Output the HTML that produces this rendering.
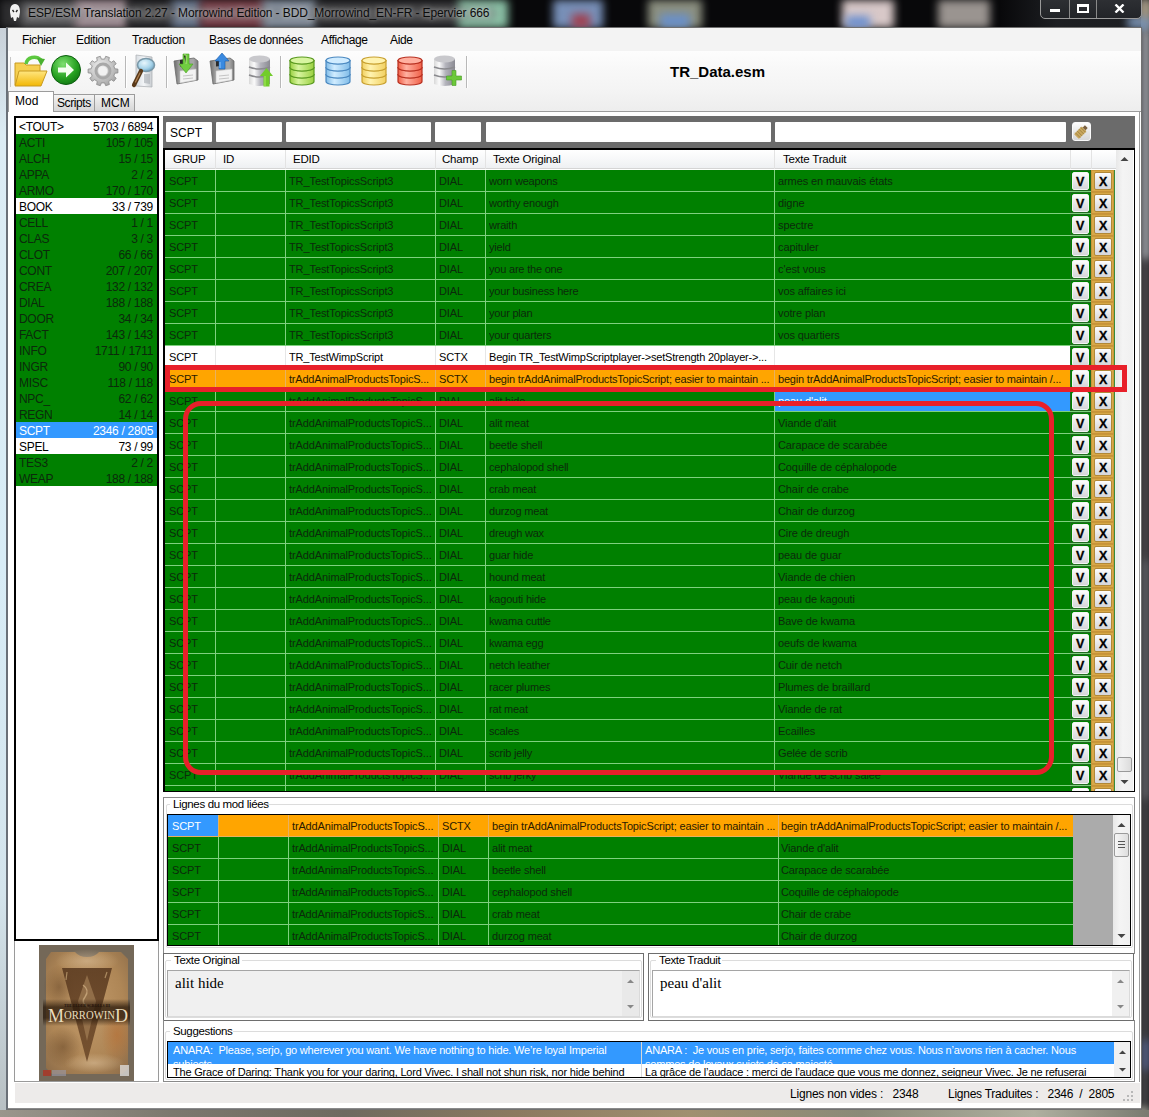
<!DOCTYPE html><html><head><meta charset='utf-8'><style>
*{margin:0;padding:0;box-sizing:border-box}
html,body{width:1149px;height:1117px;overflow:hidden}
body{position:relative;background:#0a0a0c;font-family:"Liberation Sans",sans-serif;font-size:12px;color:#000}
.abs{position:absolute}
.t{position:absolute;white-space:pre;line-height:1}
.bl{position:absolute;filter:blur(4px)}
</style></head><body><div class="abs" style="left:0;top:0;width:1149px;height:1117px;background:#08080a;overflow:hidden"><div class="bl" style="left:0px;top:0px;width:22px;height:28px;background:#2e2e30"></div><div class="bl" style="left:20px;top:0px;width:58px;height:28px;background:#58585a"></div><div class="bl" style="left:75px;top:0px;width:53px;height:28px;background:#b09aa2"></div><div class="bl" style="left:128px;top:0px;width:48px;height:28px;background:#2a2a2c"></div><div class="bl" style="left:172px;top:0px;width:30px;height:28px;background:#6e7e98"></div><div class="bl" style="left:200px;top:0px;width:66px;height:28px;background:#7e3c46"></div><div class="bl" style="left:262px;top:0px;width:56px;height:28px;background:#8a98a8"></div><div class="bl" style="left:316px;top:0px;width:146px;height:28px;background:#2a2a2c"></div><div class="bl" style="left:458px;top:0px;width:50px;height:28px;background:#8cc4a8"></div><div class="bl" style="left:553px;top:0px;width:50px;height:28px;background:#7890b8"></div><div class="bl" style="left:572px;top:14px;width:18px;height:14px;background:#a04050"></div><div class="bl" style="left:648px;top:0px;width:54px;height:28px;background:#8c9080"></div><div class="bl" style="left:660px;top:14px;width:30px;height:14px;background:#6a90c8"></div><div class="bl" style="left:842px;top:0px;width:52px;height:28px;background:#d8c8c8"></div><div class="bl" style="left:846px;top:16px;width:24px;height:12px;background:#6c90d0"></div><div class="bl" style="left:938px;top:0px;width:52px;height:28px;background:#9a9490"></div><div class="bl" style="left:1141px;top:0px;width:8px;height:1117px;background:#5a5a5e"></div><div class="bl" style="left:1143px;top:0px;width:6px;height:30px;background:#c8c0b0"></div><div class="bl" style="left:1143px;top:30px;width:6px;height:230px;background:#c8ccd4"></div><div class="bl" style="left:1143px;top:260px;width:6px;height:300px;background:#4a4448"></div><div class="bl" style="left:1143px;top:560px;width:6px;height:240px;background:#6a6a70"></div><div class="bl" style="left:1143px;top:800px;width:6px;height:240px;background:#3a3a3e"></div><div class="bl" style="left:1143px;top:1040px;width:6px;height:30px;background:#5a6aa0"></div><div class="bl" style="left:1128px;top:18px;width:21px;height:10px;background:#7890b0"></div><div class="bl" style="left:0px;top:1109px;width:1149px;height:8px;background:#7a766c"></div><div class="bl" style="left:0px;top:1109px;width:180px;height:8px;background:#8c8c86"></div><div class="bl" style="left:400px;top:1109px;width:220px;height:8px;background:#6e5a42"></div><div class="bl" style="left:700px;top:1109px;width:200px;height:8px;background:#9a9070"></div><div class="bl" style="left:960px;top:1109px;width:189px;height:8px;background:#a0a498"></div></div><div class="abs" style="left:0;top:28px;width:7px;height:1082px;background:linear-gradient(#c8d0d8,#dcecf4 10%,#d8ecf6 50%,#d4e4ec 80%,#b8c0c4)"></div><div class="abs" style="left:22px;top:6px;width:476px;height:15px;border-radius:8px;background:rgba(120,120,122,0.5);filter:blur(4px)"></div><div class="t" style="left:28px;top:7px;font-size:12px;color:#0c0c0c;letter-spacing:-0.1px;text-shadow:0 0 4px rgba(255,255,255,0.55),0 0 8px rgba(255,255,255,0.35)">ESP/ESM Translation 2.27 - Morrowind Edition - BDD_Morrowind_EN-FR - Epervier 666</div><svg class="abs" style="left:9px;top:4px" width="12" height="18" viewBox="0 0 12 18"><path d="M6 0 C10 0 11 4 11 8 L10 14 L8 13 L7 17 L5 17 L4 13 L2 14 L1 8 C1 4 2 0 6 0Z" fill="#f0f0f0"/><path d="M3.5 6 L5 8 M8.5 6 L7 8" stroke="#222" stroke-width="1.3"/></svg><div class="abs" style="left:1000px;top:0;width:141px;height:27px;background:linear-gradient(90deg,rgba(0,0,0,0),rgba(34,36,40,0.8) 40%)"></div><div class="bl" style="left:1128px;top:16px;width:21px;height:12px;background:#7890b0"></div><div class="bl" style="left:1141px;top:0px;width:8px;height:18px;background:#a89a80"></div><div class="abs" style="left:1040px;top:-2px;width:102px;height:21px;border:1px solid #9a9a9a;border-radius:0 0 5px 5px;background:linear-gradient(#2e3034,#222428)"></div><div class="abs" style="left:1069px;top:0;width:1px;height:18px;background:#8a8a8a"></div><div class="abs" style="left:1096px;top:0;width:1px;height:18px;background:#8a8a8a"></div><div class="abs" style="left:1050px;top:9px;width:10px;height:3px;background:#fff"></div><div class="abs" style="left:1077px;top:4px;width:12px;height:9px;border:2px solid #fff;border-top-width:3px"></div><svg class="abs" style="left:1114px;top:4px" width="11" height="9" viewBox="0 0 11 9"><path d="M1.5 0.5 L9.5 8.5 M9.5 0.5 L1.5 8.5" stroke="#fff" stroke-width="2.4"/></svg><div class="abs" style="left:6px;top:27px;width:1136px;height:1083px;background:#fff;border:1px solid #707070;border-left:2px solid #6a7078"></div><div class="abs" style="left:8px;top:28px;width:1133px;height:23px;background:#f3f3f3"></div><div class="t" style="left:22px;top:34px;font-size:12px;color:#000;letter-spacing:-0.35px">Fichier</div><div class="t" style="left:76px;top:34px;font-size:12px;color:#000;letter-spacing:-0.35px">Edition</div><div class="t" style="left:132px;top:34px;font-size:12px;color:#000;letter-spacing:-0.35px">Traduction</div><div class="t" style="left:209px;top:34px;font-size:12px;color:#000;letter-spacing:-0.35px">Bases de données</div><div class="t" style="left:321px;top:34px;font-size:12px;color:#000;letter-spacing:-0.35px">Affichage</div><div class="t" style="left:390px;top:34px;font-size:12px;color:#000;letter-spacing:-0.35px">Aide</div><div class="abs" style="left:8px;top:51px;width:1133px;height:60px;background:linear-gradient(#fdfdfd,#f8f8f8 30%,#f4f4f4 65%,#ededed)"></div><div class="t" style="left:670px;top:64px;font-size:15px;font-weight:bold;color:#000">TR_Data.esm</div><div class="abs" style="left:53px;top:94px;width:42px;height:17px;border:1px solid #9c9c9c;border-bottom:none;background:linear-gradient(#f4f4f4,#e4e4e4 50%,#d6d6d6)"></div><div class="abs" style="left:95px;top:94px;width:40px;height:17px;border:1px solid #9c9c9c;border-bottom:none;border-left:none;background:linear-gradient(#f4f4f4,#e4e4e4 50%,#d6d6d6)"></div><div class="abs" style="left:8px;top:111px;width:1133px;height:1px;background:#9c9c9c"></div><div class="abs" style="left:8px;top:91px;width:46px;height:21px;border:1px solid #9c9c9c;border-bottom:none;background:#fff"></div><div class="t" style="left:15px;top:95px;font-size:12px">Mod</div><div class="t" style="left:57px;top:97px;font-size:12px;letter-spacing:-0.4px">Scripts</div><div class="t" style="left:101px;top:97px;font-size:12px">MCM</div><div class="abs" style="left:1139px;top:111px;width:1px;height:971px;background:#9c9c9c"></div><div class="abs" style="left:14px;top:116px;width:145px;height:825px;border:2px solid #000;background:#fff"></div><div class="abs" style="left:16px;top:118px;width:141px;height:16px;background:#fff"></div><div class="t" style="left:19px;top:121px;font-size:12px;letter-spacing:-0.3px;color:#000">&lt;TOUT&gt;</div><div class="t" style="right:996px;top:121px;font-size:12px;letter-spacing:-0.3px;color:#000">5703 / 6894</div><div class="abs" style="left:16px;top:134px;width:141px;height:16px;background:#008000"></div><div class="t" style="left:19px;top:137px;font-size:12px;letter-spacing:-0.3px;color:#0b2a0b">ACTI</div><div class="t" style="right:996px;top:137px;font-size:12px;letter-spacing:-0.3px;color:#0b2a0b">105 / 105</div><div class="abs" style="left:16px;top:150px;width:141px;height:16px;background:#008000"></div><div class="t" style="left:19px;top:153px;font-size:12px;letter-spacing:-0.3px;color:#0b2a0b">ALCH</div><div class="t" style="right:996px;top:153px;font-size:12px;letter-spacing:-0.3px;color:#0b2a0b">15 / 15</div><div class="abs" style="left:16px;top:166px;width:141px;height:16px;background:#008000"></div><div class="t" style="left:19px;top:169px;font-size:12px;letter-spacing:-0.3px;color:#0b2a0b">APPA</div><div class="t" style="right:996px;top:169px;font-size:12px;letter-spacing:-0.3px;color:#0b2a0b">2 / 2</div><div class="abs" style="left:16px;top:182px;width:141px;height:16px;background:#008000"></div><div class="t" style="left:19px;top:185px;font-size:12px;letter-spacing:-0.3px;color:#0b2a0b">ARMO</div><div class="t" style="right:996px;top:185px;font-size:12px;letter-spacing:-0.3px;color:#0b2a0b">170 / 170</div><div class="abs" style="left:16px;top:198px;width:141px;height:16px;background:#fff"></div><div class="t" style="left:19px;top:201px;font-size:12px;letter-spacing:-0.3px;color:#000">BOOK</div><div class="t" style="right:996px;top:201px;font-size:12px;letter-spacing:-0.3px;color:#000">33 / 739</div><div class="abs" style="left:16px;top:214px;width:141px;height:16px;background:#008000"></div><div class="t" style="left:19px;top:217px;font-size:12px;letter-spacing:-0.3px;color:#0b2a0b">CELL</div><div class="t" style="right:996px;top:217px;font-size:12px;letter-spacing:-0.3px;color:#0b2a0b">1 / 1</div><div class="abs" style="left:16px;top:230px;width:141px;height:16px;background:#008000"></div><div class="t" style="left:19px;top:233px;font-size:12px;letter-spacing:-0.3px;color:#0b2a0b">CLAS</div><div class="t" style="right:996px;top:233px;font-size:12px;letter-spacing:-0.3px;color:#0b2a0b">3 / 3</div><div class="abs" style="left:16px;top:246px;width:141px;height:16px;background:#008000"></div><div class="t" style="left:19px;top:249px;font-size:12px;letter-spacing:-0.3px;color:#0b2a0b">CLOT</div><div class="t" style="right:996px;top:249px;font-size:12px;letter-spacing:-0.3px;color:#0b2a0b">66 / 66</div><div class="abs" style="left:16px;top:262px;width:141px;height:16px;background:#008000"></div><div class="t" style="left:19px;top:265px;font-size:12px;letter-spacing:-0.3px;color:#0b2a0b">CONT</div><div class="t" style="right:996px;top:265px;font-size:12px;letter-spacing:-0.3px;color:#0b2a0b">207 / 207</div><div class="abs" style="left:16px;top:278px;width:141px;height:16px;background:#008000"></div><div class="t" style="left:19px;top:281px;font-size:12px;letter-spacing:-0.3px;color:#0b2a0b">CREA</div><div class="t" style="right:996px;top:281px;font-size:12px;letter-spacing:-0.3px;color:#0b2a0b">132 / 132</div><div class="abs" style="left:16px;top:294px;width:141px;height:16px;background:#008000"></div><div class="t" style="left:19px;top:297px;font-size:12px;letter-spacing:-0.3px;color:#0b2a0b">DIAL</div><div class="t" style="right:996px;top:297px;font-size:12px;letter-spacing:-0.3px;color:#0b2a0b">188 / 188</div><div class="abs" style="left:16px;top:310px;width:141px;height:16px;background:#008000"></div><div class="t" style="left:19px;top:313px;font-size:12px;letter-spacing:-0.3px;color:#0b2a0b">DOOR</div><div class="t" style="right:996px;top:313px;font-size:12px;letter-spacing:-0.3px;color:#0b2a0b">34 / 34</div><div class="abs" style="left:16px;top:326px;width:141px;height:16px;background:#008000"></div><div class="t" style="left:19px;top:329px;font-size:12px;letter-spacing:-0.3px;color:#0b2a0b">FACT</div><div class="t" style="right:996px;top:329px;font-size:12px;letter-spacing:-0.3px;color:#0b2a0b">143 / 143</div><div class="abs" style="left:16px;top:342px;width:141px;height:16px;background:#008000"></div><div class="t" style="left:19px;top:345px;font-size:12px;letter-spacing:-0.3px;color:#0b2a0b">INFO</div><div class="t" style="right:996px;top:345px;font-size:12px;letter-spacing:-0.3px;color:#0b2a0b">1711 / 1711</div><div class="abs" style="left:16px;top:358px;width:141px;height:16px;background:#008000"></div><div class="t" style="left:19px;top:361px;font-size:12px;letter-spacing:-0.3px;color:#0b2a0b">INGR</div><div class="t" style="right:996px;top:361px;font-size:12px;letter-spacing:-0.3px;color:#0b2a0b">90 / 90</div><div class="abs" style="left:16px;top:374px;width:141px;height:16px;background:#008000"></div><div class="t" style="left:19px;top:377px;font-size:12px;letter-spacing:-0.3px;color:#0b2a0b">MISC</div><div class="t" style="right:996px;top:377px;font-size:12px;letter-spacing:-0.3px;color:#0b2a0b">118 / 118</div><div class="abs" style="left:16px;top:390px;width:141px;height:16px;background:#008000"></div><div class="t" style="left:19px;top:393px;font-size:12px;letter-spacing:-0.3px;color:#0b2a0b">NPC_</div><div class="t" style="right:996px;top:393px;font-size:12px;letter-spacing:-0.3px;color:#0b2a0b">62 / 62</div><div class="abs" style="left:16px;top:406px;width:141px;height:16px;background:#008000"></div><div class="t" style="left:19px;top:409px;font-size:12px;letter-spacing:-0.3px;color:#0b2a0b">REGN</div><div class="t" style="right:996px;top:409px;font-size:12px;letter-spacing:-0.3px;color:#0b2a0b">14 / 14</div><div class="abs" style="left:16px;top:422px;width:141px;height:16px;background:#3399ff"></div><div class="t" style="left:19px;top:425px;font-size:12px;letter-spacing:-0.3px;color:#fff">SCPT</div><div class="t" style="right:996px;top:425px;font-size:12px;letter-spacing:-0.3px;color:#fff">2346 / 2805</div><div class="abs" style="left:16px;top:438px;width:141px;height:16px;background:#fff"></div><div class="t" style="left:19px;top:441px;font-size:12px;letter-spacing:-0.3px;color:#000">SPEL</div><div class="t" style="right:996px;top:441px;font-size:12px;letter-spacing:-0.3px;color:#000">73 / 99</div><div class="abs" style="left:16px;top:454px;width:141px;height:16px;background:#008000"></div><div class="t" style="left:19px;top:457px;font-size:12px;letter-spacing:-0.3px;color:#0b2a0b">TES3</div><div class="t" style="right:996px;top:457px;font-size:12px;letter-spacing:-0.3px;color:#0b2a0b">2 / 2</div><div class="abs" style="left:16px;top:470px;width:141px;height:16px;background:#008000"></div><div class="t" style="left:19px;top:473px;font-size:12px;letter-spacing:-0.3px;color:#0b2a0b">WEAP</div><div class="t" style="right:996px;top:473px;font-size:12px;letter-spacing:-0.3px;color:#0b2a0b">188 / 188</div><div class="abs" style="left:14px;top:941px;width:145px;height:141px;border:1px solid #9a9a9a;border-top:none;background:#fff"></div><div class="abs" style="left:163px;top:116px;width:972px;height:33px;background:#6b6b6b"></div><div class="abs" style="left:166px;top:122px;width:46px;height:20px;background:#fff;border-radius:1px"></div><div class="abs" style="left:216px;top:122px;width:66px;height:20px;background:#fff;border-radius:1px"></div><div class="abs" style="left:286px;top:122px;width:145px;height:20px;background:#fff;border-radius:1px"></div><div class="abs" style="left:435px;top:122px;width:46px;height:20px;background:#fff;border-radius:1px"></div><div class="abs" style="left:486px;top:122px;width:285px;height:20px;background:#fff;border-radius:1px"></div><div class="abs" style="left:775px;top:122px;width:291px;height:20px;background:#fff;border-radius:1px"></div><div class="t" style="left:170px;top:127px;font-size:12px">SCPT</div><div class="abs" style="left:1072px;top:122px;width:19px;height:19px;border-radius:3px;border:1px solid #fafafa;background:linear-gradient(#fdfdfd,#e4e4e4 60%,#d8d8d8)"></div><svg class="abs" style="left:1072px;top:122px" width="19" height="19" viewBox="0 0 19 19"><g transform="rotate(-45 9 10)"><rect x="2.5" y="6.5" width="11" height="7" rx="1" fill="#c9a85e"/><path d="M4.5 6.5 L4.5 13.5 M7 6.5 L7 13.5 M9.5 6.5 L9.5 13.5 M12 6.5 L12 13.5" stroke="#8a6a30" stroke-width="0.7" opacity="0.8"/><rect x="13.5" y="8" width="3" height="4" fill="#7a6040"/></g></svg><div class="abs" style="left:163px;top:148px;width:972px;height:644px;border:1px solid #000;border-top-width:2px;border-left-width:2px;background:#fff;overflow:hidden"><div class="abs" style="left:0;top:0;width:951px;height:19px;background:linear-gradient(#ffffff,#f7f8f9 50%,#eef0f2);border-bottom:1px solid #d5d5d5"></div><div class="abs" style="left:50px;top:0;width:1px;height:19px;background:#e3e3e3"></div><div class="abs" style="left:120px;top:0;width:1px;height:19px;background:#e3e3e3"></div><div class="abs" style="left:270px;top:0;width:1px;height:19px;background:#e3e3e3"></div><div class="abs" style="left:320px;top:0;width:1px;height:19px;background:#e3e3e3"></div><div class="abs" style="left:609px;top:0;width:1px;height:19px;background:#e3e3e3"></div><div class="abs" style="left:905px;top:0;width:1px;height:19px;background:#e3e3e3"></div><div class="abs" style="left:926px;top:0;width:1px;height:19px;background:#e3e3e3"></div><div class="t" style="left:8px;top:4px;font-size:11.5px;letter-spacing:-0.2px;color:#000">GRUP</div><div class="t" style="left:58px;top:4px;font-size:11.5px;letter-spacing:-0.2px;color:#000">ID</div><div class="t" style="left:128px;top:4px;font-size:11.5px;letter-spacing:-0.2px;color:#000">EDID</div><div class="t" style="left:277px;top:4px;font-size:11.5px;letter-spacing:-0.2px;color:#000">Champ</div><div class="t" style="left:328px;top:4px;font-size:11.5px;letter-spacing:-0.2px;color:#000">Texte Original</div><div class="t" style="left:618px;top:4px;font-size:11.5px;letter-spacing:-0.2px;color:#000">Texte Traduit</div><div class="abs" style="left:0;top:20px;width:951px;height:22px;background:#008000"></div><div class="abs" style="left:0;top:41px;width:951px;height:1px;background:#7fd07f"></div><div class="abs" style="left:50px;top:20px;width:1px;height:22px;background:#7fd07f"></div><div class="abs" style="left:120px;top:20px;width:1px;height:22px;background:#7fd07f"></div><div class="abs" style="left:270px;top:20px;width:1px;height:22px;background:#7fd07f"></div><div class="abs" style="left:320px;top:20px;width:1px;height:22px;background:#7fd07f"></div><div class="abs" style="left:609px;top:20px;width:1px;height:22px;background:#7fd07f"></div><div class="abs" style="left:905px;top:20px;width:1px;height:22px;background:#7fd07f"></div><div class="t" style="left:4px;top:26px;font-size:11px;letter-spacing:-0.1px;color:#0b2a0b;width:45px;overflow:hidden">SCPT</div><div class="t" style="left:124px;top:26px;font-size:11px;letter-spacing:-0.1px;color:#0b2a0b;width:145px;overflow:hidden">TR_TestTopicsScript3</div><div class="t" style="left:274px;top:26px;font-size:11px;letter-spacing:-0.1px;color:#0b2a0b;width:45px;overflow:hidden">DIAL</div><div class="t" style="left:324px;top:26px;font-size:11px;letter-spacing:-0.2px;color:#0b2a0b;width:284px;overflow:hidden">worn weapons</div><div class="t" style="left:613px;top:26px;font-size:11px;letter-spacing:-0.1px;color:#0b2a0b;width:291px;overflow:hidden">armes en mauvais états</div><div class="abs" style="left:905px;top:20px;width:21px;height:21px;background:#008000;border:1px solid #226a22"></div><div class="abs" style="left:905px;top:41px;width:21px;height:1px;background:#7fd07f"></div><div class="abs" style="left:926px;top:20px;width:23px;height:22px;background:#d9a848;border:1px solid #c89838;border-bottom-color:#c8923a"></div><div class="abs" style="left:907px;top:22px;width:17px;height:18px;border-radius:2px;border:1px solid #f4f4f4;background:linear-gradient(#fdfdfd,#e8e8ea 50%,#d6d6da)"></div><div class="abs" style="left:929px;top:22px;width:18px;height:18px;border-radius:2px;border:1px solid #b08838;background:linear-gradient(#fdfdfd,#e8e8ea 50%,#d6d6da)"></div><div class="t" style="left:911px;top:26px;font-size:12.5px;font-weight:bold;color:#000;-webkit-text-stroke:0.3px #000">V</div><div class="t" style="left:934px;top:26px;font-size:12.5px;font-weight:bold;color:#000;-webkit-text-stroke:0.3px #000">X</div><div class="abs" style="left:0;top:42px;width:951px;height:22px;background:#008000"></div><div class="abs" style="left:0;top:63px;width:951px;height:1px;background:#7fd07f"></div><div class="abs" style="left:50px;top:42px;width:1px;height:22px;background:#7fd07f"></div><div class="abs" style="left:120px;top:42px;width:1px;height:22px;background:#7fd07f"></div><div class="abs" style="left:270px;top:42px;width:1px;height:22px;background:#7fd07f"></div><div class="abs" style="left:320px;top:42px;width:1px;height:22px;background:#7fd07f"></div><div class="abs" style="left:609px;top:42px;width:1px;height:22px;background:#7fd07f"></div><div class="abs" style="left:905px;top:42px;width:1px;height:22px;background:#7fd07f"></div><div class="t" style="left:4px;top:48px;font-size:11px;letter-spacing:-0.1px;color:#0b2a0b;width:45px;overflow:hidden">SCPT</div><div class="t" style="left:124px;top:48px;font-size:11px;letter-spacing:-0.1px;color:#0b2a0b;width:145px;overflow:hidden">TR_TestTopicsScript3</div><div class="t" style="left:274px;top:48px;font-size:11px;letter-spacing:-0.1px;color:#0b2a0b;width:45px;overflow:hidden">DIAL</div><div class="t" style="left:324px;top:48px;font-size:11px;letter-spacing:-0.2px;color:#0b2a0b;width:284px;overflow:hidden">worthy enough</div><div class="t" style="left:613px;top:48px;font-size:11px;letter-spacing:-0.1px;color:#0b2a0b;width:291px;overflow:hidden">digne</div><div class="abs" style="left:905px;top:42px;width:21px;height:21px;background:#008000;border:1px solid #226a22"></div><div class="abs" style="left:905px;top:63px;width:21px;height:1px;background:#7fd07f"></div><div class="abs" style="left:926px;top:42px;width:23px;height:22px;background:#d9a848;border:1px solid #c89838;border-bottom-color:#c8923a"></div><div class="abs" style="left:907px;top:44px;width:17px;height:18px;border-radius:2px;border:1px solid #f4f4f4;background:linear-gradient(#fdfdfd,#e8e8ea 50%,#d6d6da)"></div><div class="abs" style="left:929px;top:44px;width:18px;height:18px;border-radius:2px;border:1px solid #b08838;background:linear-gradient(#fdfdfd,#e8e8ea 50%,#d6d6da)"></div><div class="t" style="left:911px;top:48px;font-size:12.5px;font-weight:bold;color:#000;-webkit-text-stroke:0.3px #000">V</div><div class="t" style="left:934px;top:48px;font-size:12.5px;font-weight:bold;color:#000;-webkit-text-stroke:0.3px #000">X</div><div class="abs" style="left:0;top:64px;width:951px;height:22px;background:#008000"></div><div class="abs" style="left:0;top:85px;width:951px;height:1px;background:#7fd07f"></div><div class="abs" style="left:50px;top:64px;width:1px;height:22px;background:#7fd07f"></div><div class="abs" style="left:120px;top:64px;width:1px;height:22px;background:#7fd07f"></div><div class="abs" style="left:270px;top:64px;width:1px;height:22px;background:#7fd07f"></div><div class="abs" style="left:320px;top:64px;width:1px;height:22px;background:#7fd07f"></div><div class="abs" style="left:609px;top:64px;width:1px;height:22px;background:#7fd07f"></div><div class="abs" style="left:905px;top:64px;width:1px;height:22px;background:#7fd07f"></div><div class="t" style="left:4px;top:70px;font-size:11px;letter-spacing:-0.1px;color:#0b2a0b;width:45px;overflow:hidden">SCPT</div><div class="t" style="left:124px;top:70px;font-size:11px;letter-spacing:-0.1px;color:#0b2a0b;width:145px;overflow:hidden">TR_TestTopicsScript3</div><div class="t" style="left:274px;top:70px;font-size:11px;letter-spacing:-0.1px;color:#0b2a0b;width:45px;overflow:hidden">DIAL</div><div class="t" style="left:324px;top:70px;font-size:11px;letter-spacing:-0.2px;color:#0b2a0b;width:284px;overflow:hidden">wraith</div><div class="t" style="left:613px;top:70px;font-size:11px;letter-spacing:-0.1px;color:#0b2a0b;width:291px;overflow:hidden">spectre</div><div class="abs" style="left:905px;top:64px;width:21px;height:21px;background:#008000;border:1px solid #226a22"></div><div class="abs" style="left:905px;top:85px;width:21px;height:1px;background:#7fd07f"></div><div class="abs" style="left:926px;top:64px;width:23px;height:22px;background:#d9a848;border:1px solid #c89838;border-bottom-color:#c8923a"></div><div class="abs" style="left:907px;top:66px;width:17px;height:18px;border-radius:2px;border:1px solid #f4f4f4;background:linear-gradient(#fdfdfd,#e8e8ea 50%,#d6d6da)"></div><div class="abs" style="left:929px;top:66px;width:18px;height:18px;border-radius:2px;border:1px solid #b08838;background:linear-gradient(#fdfdfd,#e8e8ea 50%,#d6d6da)"></div><div class="t" style="left:911px;top:70px;font-size:12.5px;font-weight:bold;color:#000;-webkit-text-stroke:0.3px #000">V</div><div class="t" style="left:934px;top:70px;font-size:12.5px;font-weight:bold;color:#000;-webkit-text-stroke:0.3px #000">X</div><div class="abs" style="left:0;top:86px;width:951px;height:22px;background:#008000"></div><div class="abs" style="left:0;top:107px;width:951px;height:1px;background:#7fd07f"></div><div class="abs" style="left:50px;top:86px;width:1px;height:22px;background:#7fd07f"></div><div class="abs" style="left:120px;top:86px;width:1px;height:22px;background:#7fd07f"></div><div class="abs" style="left:270px;top:86px;width:1px;height:22px;background:#7fd07f"></div><div class="abs" style="left:320px;top:86px;width:1px;height:22px;background:#7fd07f"></div><div class="abs" style="left:609px;top:86px;width:1px;height:22px;background:#7fd07f"></div><div class="abs" style="left:905px;top:86px;width:1px;height:22px;background:#7fd07f"></div><div class="t" style="left:4px;top:92px;font-size:11px;letter-spacing:-0.1px;color:#0b2a0b;width:45px;overflow:hidden">SCPT</div><div class="t" style="left:124px;top:92px;font-size:11px;letter-spacing:-0.1px;color:#0b2a0b;width:145px;overflow:hidden">TR_TestTopicsScript3</div><div class="t" style="left:274px;top:92px;font-size:11px;letter-spacing:-0.1px;color:#0b2a0b;width:45px;overflow:hidden">DIAL</div><div class="t" style="left:324px;top:92px;font-size:11px;letter-spacing:-0.2px;color:#0b2a0b;width:284px;overflow:hidden">yield</div><div class="t" style="left:613px;top:92px;font-size:11px;letter-spacing:-0.1px;color:#0b2a0b;width:291px;overflow:hidden">capituler</div><div class="abs" style="left:905px;top:86px;width:21px;height:21px;background:#008000;border:1px solid #226a22"></div><div class="abs" style="left:905px;top:107px;width:21px;height:1px;background:#7fd07f"></div><div class="abs" style="left:926px;top:86px;width:23px;height:22px;background:#d9a848;border:1px solid #c89838;border-bottom-color:#c8923a"></div><div class="abs" style="left:907px;top:88px;width:17px;height:18px;border-radius:2px;border:1px solid #f4f4f4;background:linear-gradient(#fdfdfd,#e8e8ea 50%,#d6d6da)"></div><div class="abs" style="left:929px;top:88px;width:18px;height:18px;border-radius:2px;border:1px solid #b08838;background:linear-gradient(#fdfdfd,#e8e8ea 50%,#d6d6da)"></div><div class="t" style="left:911px;top:92px;font-size:12.5px;font-weight:bold;color:#000;-webkit-text-stroke:0.3px #000">V</div><div class="t" style="left:934px;top:92px;font-size:12.5px;font-weight:bold;color:#000;-webkit-text-stroke:0.3px #000">X</div><div class="abs" style="left:0;top:108px;width:951px;height:22px;background:#008000"></div><div class="abs" style="left:0;top:129px;width:951px;height:1px;background:#7fd07f"></div><div class="abs" style="left:50px;top:108px;width:1px;height:22px;background:#7fd07f"></div><div class="abs" style="left:120px;top:108px;width:1px;height:22px;background:#7fd07f"></div><div class="abs" style="left:270px;top:108px;width:1px;height:22px;background:#7fd07f"></div><div class="abs" style="left:320px;top:108px;width:1px;height:22px;background:#7fd07f"></div><div class="abs" style="left:609px;top:108px;width:1px;height:22px;background:#7fd07f"></div><div class="abs" style="left:905px;top:108px;width:1px;height:22px;background:#7fd07f"></div><div class="t" style="left:4px;top:114px;font-size:11px;letter-spacing:-0.1px;color:#0b2a0b;width:45px;overflow:hidden">SCPT</div><div class="t" style="left:124px;top:114px;font-size:11px;letter-spacing:-0.1px;color:#0b2a0b;width:145px;overflow:hidden">TR_TestTopicsScript3</div><div class="t" style="left:274px;top:114px;font-size:11px;letter-spacing:-0.1px;color:#0b2a0b;width:45px;overflow:hidden">DIAL</div><div class="t" style="left:324px;top:114px;font-size:11px;letter-spacing:-0.2px;color:#0b2a0b;width:284px;overflow:hidden">you are the one</div><div class="t" style="left:613px;top:114px;font-size:11px;letter-spacing:-0.1px;color:#0b2a0b;width:291px;overflow:hidden">c&#x27;est vous</div><div class="abs" style="left:905px;top:108px;width:21px;height:21px;background:#008000;border:1px solid #226a22"></div><div class="abs" style="left:905px;top:129px;width:21px;height:1px;background:#7fd07f"></div><div class="abs" style="left:926px;top:108px;width:23px;height:22px;background:#d9a848;border:1px solid #c89838;border-bottom-color:#c8923a"></div><div class="abs" style="left:907px;top:110px;width:17px;height:18px;border-radius:2px;border:1px solid #f4f4f4;background:linear-gradient(#fdfdfd,#e8e8ea 50%,#d6d6da)"></div><div class="abs" style="left:929px;top:110px;width:18px;height:18px;border-radius:2px;border:1px solid #b08838;background:linear-gradient(#fdfdfd,#e8e8ea 50%,#d6d6da)"></div><div class="t" style="left:911px;top:114px;font-size:12.5px;font-weight:bold;color:#000;-webkit-text-stroke:0.3px #000">V</div><div class="t" style="left:934px;top:114px;font-size:12.5px;font-weight:bold;color:#000;-webkit-text-stroke:0.3px #000">X</div><div class="abs" style="left:0;top:130px;width:951px;height:22px;background:#008000"></div><div class="abs" style="left:0;top:151px;width:951px;height:1px;background:#7fd07f"></div><div class="abs" style="left:50px;top:130px;width:1px;height:22px;background:#7fd07f"></div><div class="abs" style="left:120px;top:130px;width:1px;height:22px;background:#7fd07f"></div><div class="abs" style="left:270px;top:130px;width:1px;height:22px;background:#7fd07f"></div><div class="abs" style="left:320px;top:130px;width:1px;height:22px;background:#7fd07f"></div><div class="abs" style="left:609px;top:130px;width:1px;height:22px;background:#7fd07f"></div><div class="abs" style="left:905px;top:130px;width:1px;height:22px;background:#7fd07f"></div><div class="t" style="left:4px;top:136px;font-size:11px;letter-spacing:-0.1px;color:#0b2a0b;width:45px;overflow:hidden">SCPT</div><div class="t" style="left:124px;top:136px;font-size:11px;letter-spacing:-0.1px;color:#0b2a0b;width:145px;overflow:hidden">TR_TestTopicsScript3</div><div class="t" style="left:274px;top:136px;font-size:11px;letter-spacing:-0.1px;color:#0b2a0b;width:45px;overflow:hidden">DIAL</div><div class="t" style="left:324px;top:136px;font-size:11px;letter-spacing:-0.2px;color:#0b2a0b;width:284px;overflow:hidden">your business here</div><div class="t" style="left:613px;top:136px;font-size:11px;letter-spacing:-0.1px;color:#0b2a0b;width:291px;overflow:hidden">vos affaires ici</div><div class="abs" style="left:905px;top:130px;width:21px;height:21px;background:#008000;border:1px solid #226a22"></div><div class="abs" style="left:905px;top:151px;width:21px;height:1px;background:#7fd07f"></div><div class="abs" style="left:926px;top:130px;width:23px;height:22px;background:#d9a848;border:1px solid #c89838;border-bottom-color:#c8923a"></div><div class="abs" style="left:907px;top:132px;width:17px;height:18px;border-radius:2px;border:1px solid #f4f4f4;background:linear-gradient(#fdfdfd,#e8e8ea 50%,#d6d6da)"></div><div class="abs" style="left:929px;top:132px;width:18px;height:18px;border-radius:2px;border:1px solid #b08838;background:linear-gradient(#fdfdfd,#e8e8ea 50%,#d6d6da)"></div><div class="t" style="left:911px;top:136px;font-size:12.5px;font-weight:bold;color:#000;-webkit-text-stroke:0.3px #000">V</div><div class="t" style="left:934px;top:136px;font-size:12.5px;font-weight:bold;color:#000;-webkit-text-stroke:0.3px #000">X</div><div class="abs" style="left:0;top:152px;width:951px;height:22px;background:#008000"></div><div class="abs" style="left:0;top:173px;width:951px;height:1px;background:#7fd07f"></div><div class="abs" style="left:50px;top:152px;width:1px;height:22px;background:#7fd07f"></div><div class="abs" style="left:120px;top:152px;width:1px;height:22px;background:#7fd07f"></div><div class="abs" style="left:270px;top:152px;width:1px;height:22px;background:#7fd07f"></div><div class="abs" style="left:320px;top:152px;width:1px;height:22px;background:#7fd07f"></div><div class="abs" style="left:609px;top:152px;width:1px;height:22px;background:#7fd07f"></div><div class="abs" style="left:905px;top:152px;width:1px;height:22px;background:#7fd07f"></div><div class="t" style="left:4px;top:158px;font-size:11px;letter-spacing:-0.1px;color:#0b2a0b;width:45px;overflow:hidden">SCPT</div><div class="t" style="left:124px;top:158px;font-size:11px;letter-spacing:-0.1px;color:#0b2a0b;width:145px;overflow:hidden">TR_TestTopicsScript3</div><div class="t" style="left:274px;top:158px;font-size:11px;letter-spacing:-0.1px;color:#0b2a0b;width:45px;overflow:hidden">DIAL</div><div class="t" style="left:324px;top:158px;font-size:11px;letter-spacing:-0.2px;color:#0b2a0b;width:284px;overflow:hidden">your plan</div><div class="t" style="left:613px;top:158px;font-size:11px;letter-spacing:-0.1px;color:#0b2a0b;width:291px;overflow:hidden">votre plan</div><div class="abs" style="left:905px;top:152px;width:21px;height:21px;background:#008000;border:1px solid #226a22"></div><div class="abs" style="left:905px;top:173px;width:21px;height:1px;background:#7fd07f"></div><div class="abs" style="left:926px;top:152px;width:23px;height:22px;background:#d9a848;border:1px solid #c89838;border-bottom-color:#c8923a"></div><div class="abs" style="left:907px;top:154px;width:17px;height:18px;border-radius:2px;border:1px solid #f4f4f4;background:linear-gradient(#fdfdfd,#e8e8ea 50%,#d6d6da)"></div><div class="abs" style="left:929px;top:154px;width:18px;height:18px;border-radius:2px;border:1px solid #b08838;background:linear-gradient(#fdfdfd,#e8e8ea 50%,#d6d6da)"></div><div class="t" style="left:911px;top:158px;font-size:12.5px;font-weight:bold;color:#000;-webkit-text-stroke:0.3px #000">V</div><div class="t" style="left:934px;top:158px;font-size:12.5px;font-weight:bold;color:#000;-webkit-text-stroke:0.3px #000">X</div><div class="abs" style="left:0;top:174px;width:951px;height:22px;background:#008000"></div><div class="abs" style="left:0;top:195px;width:951px;height:1px;background:#7fd07f"></div><div class="abs" style="left:50px;top:174px;width:1px;height:22px;background:#7fd07f"></div><div class="abs" style="left:120px;top:174px;width:1px;height:22px;background:#7fd07f"></div><div class="abs" style="left:270px;top:174px;width:1px;height:22px;background:#7fd07f"></div><div class="abs" style="left:320px;top:174px;width:1px;height:22px;background:#7fd07f"></div><div class="abs" style="left:609px;top:174px;width:1px;height:22px;background:#7fd07f"></div><div class="abs" style="left:905px;top:174px;width:1px;height:22px;background:#7fd07f"></div><div class="t" style="left:4px;top:180px;font-size:11px;letter-spacing:-0.1px;color:#0b2a0b;width:45px;overflow:hidden">SCPT</div><div class="t" style="left:124px;top:180px;font-size:11px;letter-spacing:-0.1px;color:#0b2a0b;width:145px;overflow:hidden">TR_TestTopicsScript3</div><div class="t" style="left:274px;top:180px;font-size:11px;letter-spacing:-0.1px;color:#0b2a0b;width:45px;overflow:hidden">DIAL</div><div class="t" style="left:324px;top:180px;font-size:11px;letter-spacing:-0.2px;color:#0b2a0b;width:284px;overflow:hidden">your quarters</div><div class="t" style="left:613px;top:180px;font-size:11px;letter-spacing:-0.1px;color:#0b2a0b;width:291px;overflow:hidden">vos quartiers</div><div class="abs" style="left:905px;top:174px;width:21px;height:21px;background:#008000;border:1px solid #226a22"></div><div class="abs" style="left:905px;top:195px;width:21px;height:1px;background:#7fd07f"></div><div class="abs" style="left:926px;top:174px;width:23px;height:22px;background:#d9a848;border:1px solid #c89838;border-bottom-color:#c8923a"></div><div class="abs" style="left:907px;top:176px;width:17px;height:18px;border-radius:2px;border:1px solid #f4f4f4;background:linear-gradient(#fdfdfd,#e8e8ea 50%,#d6d6da)"></div><div class="abs" style="left:929px;top:176px;width:18px;height:18px;border-radius:2px;border:1px solid #b08838;background:linear-gradient(#fdfdfd,#e8e8ea 50%,#d6d6da)"></div><div class="t" style="left:911px;top:180px;font-size:12.5px;font-weight:bold;color:#000;-webkit-text-stroke:0.3px #000">V</div><div class="t" style="left:934px;top:180px;font-size:12.5px;font-weight:bold;color:#000;-webkit-text-stroke:0.3px #000">X</div><div class="abs" style="left:0;top:196px;width:951px;height:22px;background:#fff"></div><div class="abs" style="left:0;top:217px;width:951px;height:1px;background:#e6e6e6"></div><div class="abs" style="left:50px;top:196px;width:1px;height:22px;background:#e6e6e6"></div><div class="abs" style="left:120px;top:196px;width:1px;height:22px;background:#e6e6e6"></div><div class="abs" style="left:270px;top:196px;width:1px;height:22px;background:#e6e6e6"></div><div class="abs" style="left:320px;top:196px;width:1px;height:22px;background:#e6e6e6"></div><div class="abs" style="left:609px;top:196px;width:1px;height:22px;background:#e6e6e6"></div><div class="abs" style="left:905px;top:196px;width:1px;height:22px;background:#e6e6e6"></div><div class="t" style="left:4px;top:202px;font-size:11px;letter-spacing:-0.2px;color:#000;width:45px;overflow:hidden">SCPT</div><div class="t" style="left:124px;top:202px;font-size:11px;letter-spacing:-0.2px;color:#000;width:145px;overflow:hidden">TR_TestWimpScript</div><div class="t" style="left:274px;top:202px;font-size:11px;letter-spacing:-0.2px;color:#000;width:45px;overflow:hidden">SCTX</div><div class="t" style="left:324px;top:202px;font-size:11px;letter-spacing:-0.2px;color:#000;width:284px;overflow:hidden">Begin TR_TestWimpScriptplayer-&gt;setStrength 20player-&gt;...</div><div class="abs" style="left:905px;top:196px;width:21px;height:21px;background:#008000;border:1px solid #226a22"></div><div class="abs" style="left:905px;top:217px;width:21px;height:1px;background:#7fd07f"></div><div class="abs" style="left:926px;top:196px;width:23px;height:22px;background:#d9a848;border:1px solid #c89838;border-bottom-color:#c8923a"></div><div class="abs" style="left:907px;top:198px;width:17px;height:18px;border-radius:2px;border:1px solid #f4f4f4;background:linear-gradient(#fdfdfd,#e8e8ea 50%,#d6d6da)"></div><div class="abs" style="left:929px;top:198px;width:18px;height:18px;border-radius:2px;border:1px solid #b08838;background:linear-gradient(#fdfdfd,#e8e8ea 50%,#d6d6da)"></div><div class="t" style="left:911px;top:202px;font-size:12.5px;font-weight:bold;color:#000;-webkit-text-stroke:0.3px #000">V</div><div class="t" style="left:934px;top:202px;font-size:12.5px;font-weight:bold;color:#000;-webkit-text-stroke:0.3px #000">X</div><div class="abs" style="left:0;top:218px;width:951px;height:22px;background:#ffa500"></div><div class="abs" style="left:0;top:239px;width:951px;height:1px;background:#e8b060"></div><div class="abs" style="left:50px;top:218px;width:1px;height:22px;background:#e8b060"></div><div class="abs" style="left:120px;top:218px;width:1px;height:22px;background:#e8b060"></div><div class="abs" style="left:270px;top:218px;width:1px;height:22px;background:#e8b060"></div><div class="abs" style="left:320px;top:218px;width:1px;height:22px;background:#e8b060"></div><div class="abs" style="left:609px;top:218px;width:1px;height:22px;background:#e8b060"></div><div class="abs" style="left:905px;top:218px;width:1px;height:22px;background:#e8b060"></div><div class="t" style="left:4px;top:224px;font-size:11px;letter-spacing:-0.2px;color:#2a1a00;width:45px;overflow:hidden">SCPT</div><div class="t" style="left:124px;top:224px;font-size:11px;letter-spacing:-0.2px;color:#2a1a00;width:145px;overflow:hidden">trAddAnimalProductsTopicS...</div><div class="t" style="left:274px;top:224px;font-size:11px;letter-spacing:-0.2px;color:#2a1a00;width:45px;overflow:hidden">SCTX</div><div class="t" style="left:324px;top:224px;font-size:11px;letter-spacing:-0.2px;color:#2a1a00;width:284px;overflow:hidden">begin trAddAnimalProductsTopicScript; easier to maintain ...</div><div class="t" style="left:613px;top:224px;font-size:11px;letter-spacing:-0.2px;color:#2a1a00;width:291px;overflow:hidden">begin trAddAnimalProductsTopicScript; easier to maintain /...</div><div class="abs" style="left:905px;top:218px;width:21px;height:21px;background:#008000;border:1px solid #226a22"></div><div class="abs" style="left:905px;top:239px;width:21px;height:1px;background:#7fd07f"></div><div class="abs" style="left:926px;top:218px;width:23px;height:22px;background:#d9a848;border:1px solid #c89838;border-bottom-color:#c8923a"></div><div class="abs" style="left:907px;top:220px;width:17px;height:18px;border-radius:2px;border:1px solid #f4f4f4;background:linear-gradient(#fdfdfd,#e8e8ea 50%,#d6d6da)"></div><div class="abs" style="left:929px;top:220px;width:18px;height:18px;border-radius:2px;border:1px solid #b08838;background:linear-gradient(#fdfdfd,#e8e8ea 50%,#d6d6da)"></div><div class="t" style="left:911px;top:224px;font-size:12.5px;font-weight:bold;color:#000;-webkit-text-stroke:0.3px #000">V</div><div class="t" style="left:934px;top:224px;font-size:12.5px;font-weight:bold;color:#000;-webkit-text-stroke:0.3px #000">X</div><div class="abs" style="left:0;top:240px;width:951px;height:22px;background:#008000"></div><div class="abs" style="left:610px;top:240px;width:295px;height:22px;background:#3399ff"></div><div class="abs" style="left:0;top:261px;width:951px;height:1px;background:#7fd07f"></div><div class="abs" style="left:50px;top:240px;width:1px;height:22px;background:#7fd07f"></div><div class="abs" style="left:120px;top:240px;width:1px;height:22px;background:#7fd07f"></div><div class="abs" style="left:270px;top:240px;width:1px;height:22px;background:#7fd07f"></div><div class="abs" style="left:320px;top:240px;width:1px;height:22px;background:#7fd07f"></div><div class="abs" style="left:609px;top:240px;width:1px;height:22px;background:#7fd07f"></div><div class="abs" style="left:905px;top:240px;width:1px;height:22px;background:#7fd07f"></div><div class="t" style="left:4px;top:246px;font-size:11px;letter-spacing:-0.1px;color:#0b2a0b;width:45px;overflow:hidden">SCPT</div><div class="t" style="left:124px;top:246px;font-size:11px;letter-spacing:-0.1px;color:#0b2a0b;width:145px;overflow:hidden">trAddAnimalProductsTopicS...</div><div class="t" style="left:274px;top:246px;font-size:11px;letter-spacing:-0.1px;color:#0b2a0b;width:45px;overflow:hidden">DIAL</div><div class="t" style="left:324px;top:246px;font-size:11px;letter-spacing:-0.2px;color:#0b2a0b;width:284px;overflow:hidden">alit hide</div><div class="t" style="left:613px;top:246px;font-size:11px;letter-spacing:-0.1px;color:#fff;width:291px;overflow:hidden">peau d&#x27;alit</div><div class="abs" style="left:905px;top:240px;width:21px;height:21px;background:#008000;border:1px solid #226a22"></div><div class="abs" style="left:905px;top:261px;width:21px;height:1px;background:#7fd07f"></div><div class="abs" style="left:926px;top:240px;width:23px;height:22px;background:#d9a848;border:1px solid #c89838;border-bottom-color:#c8923a"></div><div class="abs" style="left:907px;top:242px;width:17px;height:18px;border-radius:2px;border:1px solid #f4f4f4;background:linear-gradient(#fdfdfd,#e8e8ea 50%,#d6d6da)"></div><div class="abs" style="left:929px;top:242px;width:18px;height:18px;border-radius:2px;border:1px solid #b08838;background:linear-gradient(#fdfdfd,#e8e8ea 50%,#d6d6da)"></div><div class="t" style="left:911px;top:246px;font-size:12.5px;font-weight:bold;color:#000;-webkit-text-stroke:0.3px #000">V</div><div class="t" style="left:934px;top:246px;font-size:12.5px;font-weight:bold;color:#000;-webkit-text-stroke:0.3px #000">X</div><div class="abs" style="left:0;top:262px;width:951px;height:22px;background:#008000"></div><div class="abs" style="left:0;top:283px;width:951px;height:1px;background:#7fd07f"></div><div class="abs" style="left:50px;top:262px;width:1px;height:22px;background:#7fd07f"></div><div class="abs" style="left:120px;top:262px;width:1px;height:22px;background:#7fd07f"></div><div class="abs" style="left:270px;top:262px;width:1px;height:22px;background:#7fd07f"></div><div class="abs" style="left:320px;top:262px;width:1px;height:22px;background:#7fd07f"></div><div class="abs" style="left:609px;top:262px;width:1px;height:22px;background:#7fd07f"></div><div class="abs" style="left:905px;top:262px;width:1px;height:22px;background:#7fd07f"></div><div class="t" style="left:4px;top:268px;font-size:11px;letter-spacing:-0.1px;color:#0b2a0b;width:45px;overflow:hidden">SCPT</div><div class="t" style="left:124px;top:268px;font-size:11px;letter-spacing:-0.1px;color:#0b2a0b;width:145px;overflow:hidden">trAddAnimalProductsTopicS...</div><div class="t" style="left:274px;top:268px;font-size:11px;letter-spacing:-0.1px;color:#0b2a0b;width:45px;overflow:hidden">DIAL</div><div class="t" style="left:324px;top:268px;font-size:11px;letter-spacing:-0.2px;color:#0b2a0b;width:284px;overflow:hidden">alit meat</div><div class="t" style="left:613px;top:268px;font-size:11px;letter-spacing:-0.1px;color:#0b2a0b;width:291px;overflow:hidden">Viande d&#x27;alit</div><div class="abs" style="left:905px;top:262px;width:21px;height:21px;background:#008000;border:1px solid #226a22"></div><div class="abs" style="left:905px;top:283px;width:21px;height:1px;background:#7fd07f"></div><div class="abs" style="left:926px;top:262px;width:23px;height:22px;background:#d9a848;border:1px solid #c89838;border-bottom-color:#c8923a"></div><div class="abs" style="left:907px;top:264px;width:17px;height:18px;border-radius:2px;border:1px solid #f4f4f4;background:linear-gradient(#fdfdfd,#e8e8ea 50%,#d6d6da)"></div><div class="abs" style="left:929px;top:264px;width:18px;height:18px;border-radius:2px;border:1px solid #b08838;background:linear-gradient(#fdfdfd,#e8e8ea 50%,#d6d6da)"></div><div class="t" style="left:911px;top:268px;font-size:12.5px;font-weight:bold;color:#000;-webkit-text-stroke:0.3px #000">V</div><div class="t" style="left:934px;top:268px;font-size:12.5px;font-weight:bold;color:#000;-webkit-text-stroke:0.3px #000">X</div><div class="abs" style="left:0;top:284px;width:951px;height:22px;background:#008000"></div><div class="abs" style="left:0;top:305px;width:951px;height:1px;background:#7fd07f"></div><div class="abs" style="left:50px;top:284px;width:1px;height:22px;background:#7fd07f"></div><div class="abs" style="left:120px;top:284px;width:1px;height:22px;background:#7fd07f"></div><div class="abs" style="left:270px;top:284px;width:1px;height:22px;background:#7fd07f"></div><div class="abs" style="left:320px;top:284px;width:1px;height:22px;background:#7fd07f"></div><div class="abs" style="left:609px;top:284px;width:1px;height:22px;background:#7fd07f"></div><div class="abs" style="left:905px;top:284px;width:1px;height:22px;background:#7fd07f"></div><div class="t" style="left:4px;top:290px;font-size:11px;letter-spacing:-0.1px;color:#0b2a0b;width:45px;overflow:hidden">SCPT</div><div class="t" style="left:124px;top:290px;font-size:11px;letter-spacing:-0.1px;color:#0b2a0b;width:145px;overflow:hidden">trAddAnimalProductsTopicS...</div><div class="t" style="left:274px;top:290px;font-size:11px;letter-spacing:-0.1px;color:#0b2a0b;width:45px;overflow:hidden">DIAL</div><div class="t" style="left:324px;top:290px;font-size:11px;letter-spacing:-0.2px;color:#0b2a0b;width:284px;overflow:hidden">beetle shell</div><div class="t" style="left:613px;top:290px;font-size:11px;letter-spacing:-0.1px;color:#0b2a0b;width:291px;overflow:hidden">Carapace de scarabée</div><div class="abs" style="left:905px;top:284px;width:21px;height:21px;background:#008000;border:1px solid #226a22"></div><div class="abs" style="left:905px;top:305px;width:21px;height:1px;background:#7fd07f"></div><div class="abs" style="left:926px;top:284px;width:23px;height:22px;background:#d9a848;border:1px solid #c89838;border-bottom-color:#c8923a"></div><div class="abs" style="left:907px;top:286px;width:17px;height:18px;border-radius:2px;border:1px solid #f4f4f4;background:linear-gradient(#fdfdfd,#e8e8ea 50%,#d6d6da)"></div><div class="abs" style="left:929px;top:286px;width:18px;height:18px;border-radius:2px;border:1px solid #b08838;background:linear-gradient(#fdfdfd,#e8e8ea 50%,#d6d6da)"></div><div class="t" style="left:911px;top:290px;font-size:12.5px;font-weight:bold;color:#000;-webkit-text-stroke:0.3px #000">V</div><div class="t" style="left:934px;top:290px;font-size:12.5px;font-weight:bold;color:#000;-webkit-text-stroke:0.3px #000">X</div><div class="abs" style="left:0;top:306px;width:951px;height:22px;background:#008000"></div><div class="abs" style="left:0;top:327px;width:951px;height:1px;background:#7fd07f"></div><div class="abs" style="left:50px;top:306px;width:1px;height:22px;background:#7fd07f"></div><div class="abs" style="left:120px;top:306px;width:1px;height:22px;background:#7fd07f"></div><div class="abs" style="left:270px;top:306px;width:1px;height:22px;background:#7fd07f"></div><div class="abs" style="left:320px;top:306px;width:1px;height:22px;background:#7fd07f"></div><div class="abs" style="left:609px;top:306px;width:1px;height:22px;background:#7fd07f"></div><div class="abs" style="left:905px;top:306px;width:1px;height:22px;background:#7fd07f"></div><div class="t" style="left:4px;top:312px;font-size:11px;letter-spacing:-0.1px;color:#0b2a0b;width:45px;overflow:hidden">SCPT</div><div class="t" style="left:124px;top:312px;font-size:11px;letter-spacing:-0.1px;color:#0b2a0b;width:145px;overflow:hidden">trAddAnimalProductsTopicS...</div><div class="t" style="left:274px;top:312px;font-size:11px;letter-spacing:-0.1px;color:#0b2a0b;width:45px;overflow:hidden">DIAL</div><div class="t" style="left:324px;top:312px;font-size:11px;letter-spacing:-0.2px;color:#0b2a0b;width:284px;overflow:hidden">cephalopod shell</div><div class="t" style="left:613px;top:312px;font-size:11px;letter-spacing:-0.1px;color:#0b2a0b;width:291px;overflow:hidden">Coquille de céphalopode</div><div class="abs" style="left:905px;top:306px;width:21px;height:21px;background:#008000;border:1px solid #226a22"></div><div class="abs" style="left:905px;top:327px;width:21px;height:1px;background:#7fd07f"></div><div class="abs" style="left:926px;top:306px;width:23px;height:22px;background:#d9a848;border:1px solid #c89838;border-bottom-color:#c8923a"></div><div class="abs" style="left:907px;top:308px;width:17px;height:18px;border-radius:2px;border:1px solid #f4f4f4;background:linear-gradient(#fdfdfd,#e8e8ea 50%,#d6d6da)"></div><div class="abs" style="left:929px;top:308px;width:18px;height:18px;border-radius:2px;border:1px solid #b08838;background:linear-gradient(#fdfdfd,#e8e8ea 50%,#d6d6da)"></div><div class="t" style="left:911px;top:312px;font-size:12.5px;font-weight:bold;color:#000;-webkit-text-stroke:0.3px #000">V</div><div class="t" style="left:934px;top:312px;font-size:12.5px;font-weight:bold;color:#000;-webkit-text-stroke:0.3px #000">X</div><div class="abs" style="left:0;top:328px;width:951px;height:22px;background:#008000"></div><div class="abs" style="left:0;top:349px;width:951px;height:1px;background:#7fd07f"></div><div class="abs" style="left:50px;top:328px;width:1px;height:22px;background:#7fd07f"></div><div class="abs" style="left:120px;top:328px;width:1px;height:22px;background:#7fd07f"></div><div class="abs" style="left:270px;top:328px;width:1px;height:22px;background:#7fd07f"></div><div class="abs" style="left:320px;top:328px;width:1px;height:22px;background:#7fd07f"></div><div class="abs" style="left:609px;top:328px;width:1px;height:22px;background:#7fd07f"></div><div class="abs" style="left:905px;top:328px;width:1px;height:22px;background:#7fd07f"></div><div class="t" style="left:4px;top:334px;font-size:11px;letter-spacing:-0.1px;color:#0b2a0b;width:45px;overflow:hidden">SCPT</div><div class="t" style="left:124px;top:334px;font-size:11px;letter-spacing:-0.1px;color:#0b2a0b;width:145px;overflow:hidden">trAddAnimalProductsTopicS...</div><div class="t" style="left:274px;top:334px;font-size:11px;letter-spacing:-0.1px;color:#0b2a0b;width:45px;overflow:hidden">DIAL</div><div class="t" style="left:324px;top:334px;font-size:11px;letter-spacing:-0.2px;color:#0b2a0b;width:284px;overflow:hidden">crab meat</div><div class="t" style="left:613px;top:334px;font-size:11px;letter-spacing:-0.1px;color:#0b2a0b;width:291px;overflow:hidden">Chair de crabe</div><div class="abs" style="left:905px;top:328px;width:21px;height:21px;background:#008000;border:1px solid #226a22"></div><div class="abs" style="left:905px;top:349px;width:21px;height:1px;background:#7fd07f"></div><div class="abs" style="left:926px;top:328px;width:23px;height:22px;background:#d9a848;border:1px solid #c89838;border-bottom-color:#c8923a"></div><div class="abs" style="left:907px;top:330px;width:17px;height:18px;border-radius:2px;border:1px solid #f4f4f4;background:linear-gradient(#fdfdfd,#e8e8ea 50%,#d6d6da)"></div><div class="abs" style="left:929px;top:330px;width:18px;height:18px;border-radius:2px;border:1px solid #b08838;background:linear-gradient(#fdfdfd,#e8e8ea 50%,#d6d6da)"></div><div class="t" style="left:911px;top:334px;font-size:12.5px;font-weight:bold;color:#000;-webkit-text-stroke:0.3px #000">V</div><div class="t" style="left:934px;top:334px;font-size:12.5px;font-weight:bold;color:#000;-webkit-text-stroke:0.3px #000">X</div><div class="abs" style="left:0;top:350px;width:951px;height:22px;background:#008000"></div><div class="abs" style="left:0;top:371px;width:951px;height:1px;background:#7fd07f"></div><div class="abs" style="left:50px;top:350px;width:1px;height:22px;background:#7fd07f"></div><div class="abs" style="left:120px;top:350px;width:1px;height:22px;background:#7fd07f"></div><div class="abs" style="left:270px;top:350px;width:1px;height:22px;background:#7fd07f"></div><div class="abs" style="left:320px;top:350px;width:1px;height:22px;background:#7fd07f"></div><div class="abs" style="left:609px;top:350px;width:1px;height:22px;background:#7fd07f"></div><div class="abs" style="left:905px;top:350px;width:1px;height:22px;background:#7fd07f"></div><div class="t" style="left:4px;top:356px;font-size:11px;letter-spacing:-0.1px;color:#0b2a0b;width:45px;overflow:hidden">SCPT</div><div class="t" style="left:124px;top:356px;font-size:11px;letter-spacing:-0.1px;color:#0b2a0b;width:145px;overflow:hidden">trAddAnimalProductsTopicS...</div><div class="t" style="left:274px;top:356px;font-size:11px;letter-spacing:-0.1px;color:#0b2a0b;width:45px;overflow:hidden">DIAL</div><div class="t" style="left:324px;top:356px;font-size:11px;letter-spacing:-0.2px;color:#0b2a0b;width:284px;overflow:hidden">durzog meat</div><div class="t" style="left:613px;top:356px;font-size:11px;letter-spacing:-0.1px;color:#0b2a0b;width:291px;overflow:hidden">Chair de durzog</div><div class="abs" style="left:905px;top:350px;width:21px;height:21px;background:#008000;border:1px solid #226a22"></div><div class="abs" style="left:905px;top:371px;width:21px;height:1px;background:#7fd07f"></div><div class="abs" style="left:926px;top:350px;width:23px;height:22px;background:#d9a848;border:1px solid #c89838;border-bottom-color:#c8923a"></div><div class="abs" style="left:907px;top:352px;width:17px;height:18px;border-radius:2px;border:1px solid #f4f4f4;background:linear-gradient(#fdfdfd,#e8e8ea 50%,#d6d6da)"></div><div class="abs" style="left:929px;top:352px;width:18px;height:18px;border-radius:2px;border:1px solid #b08838;background:linear-gradient(#fdfdfd,#e8e8ea 50%,#d6d6da)"></div><div class="t" style="left:911px;top:356px;font-size:12.5px;font-weight:bold;color:#000;-webkit-text-stroke:0.3px #000">V</div><div class="t" style="left:934px;top:356px;font-size:12.5px;font-weight:bold;color:#000;-webkit-text-stroke:0.3px #000">X</div><div class="abs" style="left:0;top:372px;width:951px;height:22px;background:#008000"></div><div class="abs" style="left:0;top:393px;width:951px;height:1px;background:#7fd07f"></div><div class="abs" style="left:50px;top:372px;width:1px;height:22px;background:#7fd07f"></div><div class="abs" style="left:120px;top:372px;width:1px;height:22px;background:#7fd07f"></div><div class="abs" style="left:270px;top:372px;width:1px;height:22px;background:#7fd07f"></div><div class="abs" style="left:320px;top:372px;width:1px;height:22px;background:#7fd07f"></div><div class="abs" style="left:609px;top:372px;width:1px;height:22px;background:#7fd07f"></div><div class="abs" style="left:905px;top:372px;width:1px;height:22px;background:#7fd07f"></div><div class="t" style="left:4px;top:378px;font-size:11px;letter-spacing:-0.1px;color:#0b2a0b;width:45px;overflow:hidden">SCPT</div><div class="t" style="left:124px;top:378px;font-size:11px;letter-spacing:-0.1px;color:#0b2a0b;width:145px;overflow:hidden">trAddAnimalProductsTopicS...</div><div class="t" style="left:274px;top:378px;font-size:11px;letter-spacing:-0.1px;color:#0b2a0b;width:45px;overflow:hidden">DIAL</div><div class="t" style="left:324px;top:378px;font-size:11px;letter-spacing:-0.2px;color:#0b2a0b;width:284px;overflow:hidden">dreugh wax</div><div class="t" style="left:613px;top:378px;font-size:11px;letter-spacing:-0.1px;color:#0b2a0b;width:291px;overflow:hidden">Cire de dreugh</div><div class="abs" style="left:905px;top:372px;width:21px;height:21px;background:#008000;border:1px solid #226a22"></div><div class="abs" style="left:905px;top:393px;width:21px;height:1px;background:#7fd07f"></div><div class="abs" style="left:926px;top:372px;width:23px;height:22px;background:#d9a848;border:1px solid #c89838;border-bottom-color:#c8923a"></div><div class="abs" style="left:907px;top:374px;width:17px;height:18px;border-radius:2px;border:1px solid #f4f4f4;background:linear-gradient(#fdfdfd,#e8e8ea 50%,#d6d6da)"></div><div class="abs" style="left:929px;top:374px;width:18px;height:18px;border-radius:2px;border:1px solid #b08838;background:linear-gradient(#fdfdfd,#e8e8ea 50%,#d6d6da)"></div><div class="t" style="left:911px;top:378px;font-size:12.5px;font-weight:bold;color:#000;-webkit-text-stroke:0.3px #000">V</div><div class="t" style="left:934px;top:378px;font-size:12.5px;font-weight:bold;color:#000;-webkit-text-stroke:0.3px #000">X</div><div class="abs" style="left:0;top:394px;width:951px;height:22px;background:#008000"></div><div class="abs" style="left:0;top:415px;width:951px;height:1px;background:#7fd07f"></div><div class="abs" style="left:50px;top:394px;width:1px;height:22px;background:#7fd07f"></div><div class="abs" style="left:120px;top:394px;width:1px;height:22px;background:#7fd07f"></div><div class="abs" style="left:270px;top:394px;width:1px;height:22px;background:#7fd07f"></div><div class="abs" style="left:320px;top:394px;width:1px;height:22px;background:#7fd07f"></div><div class="abs" style="left:609px;top:394px;width:1px;height:22px;background:#7fd07f"></div><div class="abs" style="left:905px;top:394px;width:1px;height:22px;background:#7fd07f"></div><div class="t" style="left:4px;top:400px;font-size:11px;letter-spacing:-0.1px;color:#0b2a0b;width:45px;overflow:hidden">SCPT</div><div class="t" style="left:124px;top:400px;font-size:11px;letter-spacing:-0.1px;color:#0b2a0b;width:145px;overflow:hidden">trAddAnimalProductsTopicS...</div><div class="t" style="left:274px;top:400px;font-size:11px;letter-spacing:-0.1px;color:#0b2a0b;width:45px;overflow:hidden">DIAL</div><div class="t" style="left:324px;top:400px;font-size:11px;letter-spacing:-0.2px;color:#0b2a0b;width:284px;overflow:hidden">guar hide</div><div class="t" style="left:613px;top:400px;font-size:11px;letter-spacing:-0.1px;color:#0b2a0b;width:291px;overflow:hidden">peau de guar</div><div class="abs" style="left:905px;top:394px;width:21px;height:21px;background:#008000;border:1px solid #226a22"></div><div class="abs" style="left:905px;top:415px;width:21px;height:1px;background:#7fd07f"></div><div class="abs" style="left:926px;top:394px;width:23px;height:22px;background:#d9a848;border:1px solid #c89838;border-bottom-color:#c8923a"></div><div class="abs" style="left:907px;top:396px;width:17px;height:18px;border-radius:2px;border:1px solid #f4f4f4;background:linear-gradient(#fdfdfd,#e8e8ea 50%,#d6d6da)"></div><div class="abs" style="left:929px;top:396px;width:18px;height:18px;border-radius:2px;border:1px solid #b08838;background:linear-gradient(#fdfdfd,#e8e8ea 50%,#d6d6da)"></div><div class="t" style="left:911px;top:400px;font-size:12.5px;font-weight:bold;color:#000;-webkit-text-stroke:0.3px #000">V</div><div class="t" style="left:934px;top:400px;font-size:12.5px;font-weight:bold;color:#000;-webkit-text-stroke:0.3px #000">X</div><div class="abs" style="left:0;top:416px;width:951px;height:22px;background:#008000"></div><div class="abs" style="left:0;top:437px;width:951px;height:1px;background:#7fd07f"></div><div class="abs" style="left:50px;top:416px;width:1px;height:22px;background:#7fd07f"></div><div class="abs" style="left:120px;top:416px;width:1px;height:22px;background:#7fd07f"></div><div class="abs" style="left:270px;top:416px;width:1px;height:22px;background:#7fd07f"></div><div class="abs" style="left:320px;top:416px;width:1px;height:22px;background:#7fd07f"></div><div class="abs" style="left:609px;top:416px;width:1px;height:22px;background:#7fd07f"></div><div class="abs" style="left:905px;top:416px;width:1px;height:22px;background:#7fd07f"></div><div class="t" style="left:4px;top:422px;font-size:11px;letter-spacing:-0.1px;color:#0b2a0b;width:45px;overflow:hidden">SCPT</div><div class="t" style="left:124px;top:422px;font-size:11px;letter-spacing:-0.1px;color:#0b2a0b;width:145px;overflow:hidden">trAddAnimalProductsTopicS...</div><div class="t" style="left:274px;top:422px;font-size:11px;letter-spacing:-0.1px;color:#0b2a0b;width:45px;overflow:hidden">DIAL</div><div class="t" style="left:324px;top:422px;font-size:11px;letter-spacing:-0.2px;color:#0b2a0b;width:284px;overflow:hidden">hound meat</div><div class="t" style="left:613px;top:422px;font-size:11px;letter-spacing:-0.1px;color:#0b2a0b;width:291px;overflow:hidden">Viande de chien</div><div class="abs" style="left:905px;top:416px;width:21px;height:21px;background:#008000;border:1px solid #226a22"></div><div class="abs" style="left:905px;top:437px;width:21px;height:1px;background:#7fd07f"></div><div class="abs" style="left:926px;top:416px;width:23px;height:22px;background:#d9a848;border:1px solid #c89838;border-bottom-color:#c8923a"></div><div class="abs" style="left:907px;top:418px;width:17px;height:18px;border-radius:2px;border:1px solid #f4f4f4;background:linear-gradient(#fdfdfd,#e8e8ea 50%,#d6d6da)"></div><div class="abs" style="left:929px;top:418px;width:18px;height:18px;border-radius:2px;border:1px solid #b08838;background:linear-gradient(#fdfdfd,#e8e8ea 50%,#d6d6da)"></div><div class="t" style="left:911px;top:422px;font-size:12.5px;font-weight:bold;color:#000;-webkit-text-stroke:0.3px #000">V</div><div class="t" style="left:934px;top:422px;font-size:12.5px;font-weight:bold;color:#000;-webkit-text-stroke:0.3px #000">X</div><div class="abs" style="left:0;top:438px;width:951px;height:22px;background:#008000"></div><div class="abs" style="left:0;top:459px;width:951px;height:1px;background:#7fd07f"></div><div class="abs" style="left:50px;top:438px;width:1px;height:22px;background:#7fd07f"></div><div class="abs" style="left:120px;top:438px;width:1px;height:22px;background:#7fd07f"></div><div class="abs" style="left:270px;top:438px;width:1px;height:22px;background:#7fd07f"></div><div class="abs" style="left:320px;top:438px;width:1px;height:22px;background:#7fd07f"></div><div class="abs" style="left:609px;top:438px;width:1px;height:22px;background:#7fd07f"></div><div class="abs" style="left:905px;top:438px;width:1px;height:22px;background:#7fd07f"></div><div class="t" style="left:4px;top:444px;font-size:11px;letter-spacing:-0.1px;color:#0b2a0b;width:45px;overflow:hidden">SCPT</div><div class="t" style="left:124px;top:444px;font-size:11px;letter-spacing:-0.1px;color:#0b2a0b;width:145px;overflow:hidden">trAddAnimalProductsTopicS...</div><div class="t" style="left:274px;top:444px;font-size:11px;letter-spacing:-0.1px;color:#0b2a0b;width:45px;overflow:hidden">DIAL</div><div class="t" style="left:324px;top:444px;font-size:11px;letter-spacing:-0.2px;color:#0b2a0b;width:284px;overflow:hidden">kagouti hide</div><div class="t" style="left:613px;top:444px;font-size:11px;letter-spacing:-0.1px;color:#0b2a0b;width:291px;overflow:hidden">peau de kagouti</div><div class="abs" style="left:905px;top:438px;width:21px;height:21px;background:#008000;border:1px solid #226a22"></div><div class="abs" style="left:905px;top:459px;width:21px;height:1px;background:#7fd07f"></div><div class="abs" style="left:926px;top:438px;width:23px;height:22px;background:#d9a848;border:1px solid #c89838;border-bottom-color:#c8923a"></div><div class="abs" style="left:907px;top:440px;width:17px;height:18px;border-radius:2px;border:1px solid #f4f4f4;background:linear-gradient(#fdfdfd,#e8e8ea 50%,#d6d6da)"></div><div class="abs" style="left:929px;top:440px;width:18px;height:18px;border-radius:2px;border:1px solid #b08838;background:linear-gradient(#fdfdfd,#e8e8ea 50%,#d6d6da)"></div><div class="t" style="left:911px;top:444px;font-size:12.5px;font-weight:bold;color:#000;-webkit-text-stroke:0.3px #000">V</div><div class="t" style="left:934px;top:444px;font-size:12.5px;font-weight:bold;color:#000;-webkit-text-stroke:0.3px #000">X</div><div class="abs" style="left:0;top:460px;width:951px;height:22px;background:#008000"></div><div class="abs" style="left:0;top:481px;width:951px;height:1px;background:#7fd07f"></div><div class="abs" style="left:50px;top:460px;width:1px;height:22px;background:#7fd07f"></div><div class="abs" style="left:120px;top:460px;width:1px;height:22px;background:#7fd07f"></div><div class="abs" style="left:270px;top:460px;width:1px;height:22px;background:#7fd07f"></div><div class="abs" style="left:320px;top:460px;width:1px;height:22px;background:#7fd07f"></div><div class="abs" style="left:609px;top:460px;width:1px;height:22px;background:#7fd07f"></div><div class="abs" style="left:905px;top:460px;width:1px;height:22px;background:#7fd07f"></div><div class="t" style="left:4px;top:466px;font-size:11px;letter-spacing:-0.1px;color:#0b2a0b;width:45px;overflow:hidden">SCPT</div><div class="t" style="left:124px;top:466px;font-size:11px;letter-spacing:-0.1px;color:#0b2a0b;width:145px;overflow:hidden">trAddAnimalProductsTopicS...</div><div class="t" style="left:274px;top:466px;font-size:11px;letter-spacing:-0.1px;color:#0b2a0b;width:45px;overflow:hidden">DIAL</div><div class="t" style="left:324px;top:466px;font-size:11px;letter-spacing:-0.2px;color:#0b2a0b;width:284px;overflow:hidden">kwama cuttle</div><div class="t" style="left:613px;top:466px;font-size:11px;letter-spacing:-0.1px;color:#0b2a0b;width:291px;overflow:hidden">Bave de kwama</div><div class="abs" style="left:905px;top:460px;width:21px;height:21px;background:#008000;border:1px solid #226a22"></div><div class="abs" style="left:905px;top:481px;width:21px;height:1px;background:#7fd07f"></div><div class="abs" style="left:926px;top:460px;width:23px;height:22px;background:#d9a848;border:1px solid #c89838;border-bottom-color:#c8923a"></div><div class="abs" style="left:907px;top:462px;width:17px;height:18px;border-radius:2px;border:1px solid #f4f4f4;background:linear-gradient(#fdfdfd,#e8e8ea 50%,#d6d6da)"></div><div class="abs" style="left:929px;top:462px;width:18px;height:18px;border-radius:2px;border:1px solid #b08838;background:linear-gradient(#fdfdfd,#e8e8ea 50%,#d6d6da)"></div><div class="t" style="left:911px;top:466px;font-size:12.5px;font-weight:bold;color:#000;-webkit-text-stroke:0.3px #000">V</div><div class="t" style="left:934px;top:466px;font-size:12.5px;font-weight:bold;color:#000;-webkit-text-stroke:0.3px #000">X</div><div class="abs" style="left:0;top:482px;width:951px;height:22px;background:#008000"></div><div class="abs" style="left:0;top:503px;width:951px;height:1px;background:#7fd07f"></div><div class="abs" style="left:50px;top:482px;width:1px;height:22px;background:#7fd07f"></div><div class="abs" style="left:120px;top:482px;width:1px;height:22px;background:#7fd07f"></div><div class="abs" style="left:270px;top:482px;width:1px;height:22px;background:#7fd07f"></div><div class="abs" style="left:320px;top:482px;width:1px;height:22px;background:#7fd07f"></div><div class="abs" style="left:609px;top:482px;width:1px;height:22px;background:#7fd07f"></div><div class="abs" style="left:905px;top:482px;width:1px;height:22px;background:#7fd07f"></div><div class="t" style="left:4px;top:488px;font-size:11px;letter-spacing:-0.1px;color:#0b2a0b;width:45px;overflow:hidden">SCPT</div><div class="t" style="left:124px;top:488px;font-size:11px;letter-spacing:-0.1px;color:#0b2a0b;width:145px;overflow:hidden">trAddAnimalProductsTopicS...</div><div class="t" style="left:274px;top:488px;font-size:11px;letter-spacing:-0.1px;color:#0b2a0b;width:45px;overflow:hidden">DIAL</div><div class="t" style="left:324px;top:488px;font-size:11px;letter-spacing:-0.2px;color:#0b2a0b;width:284px;overflow:hidden">kwama egg</div><div class="t" style="left:613px;top:488px;font-size:11px;letter-spacing:-0.1px;color:#0b2a0b;width:291px;overflow:hidden">oeufs de kwama</div><div class="abs" style="left:905px;top:482px;width:21px;height:21px;background:#008000;border:1px solid #226a22"></div><div class="abs" style="left:905px;top:503px;width:21px;height:1px;background:#7fd07f"></div><div class="abs" style="left:926px;top:482px;width:23px;height:22px;background:#d9a848;border:1px solid #c89838;border-bottom-color:#c8923a"></div><div class="abs" style="left:907px;top:484px;width:17px;height:18px;border-radius:2px;border:1px solid #f4f4f4;background:linear-gradient(#fdfdfd,#e8e8ea 50%,#d6d6da)"></div><div class="abs" style="left:929px;top:484px;width:18px;height:18px;border-radius:2px;border:1px solid #b08838;background:linear-gradient(#fdfdfd,#e8e8ea 50%,#d6d6da)"></div><div class="t" style="left:911px;top:488px;font-size:12.5px;font-weight:bold;color:#000;-webkit-text-stroke:0.3px #000">V</div><div class="t" style="left:934px;top:488px;font-size:12.5px;font-weight:bold;color:#000;-webkit-text-stroke:0.3px #000">X</div><div class="abs" style="left:0;top:504px;width:951px;height:22px;background:#008000"></div><div class="abs" style="left:0;top:525px;width:951px;height:1px;background:#7fd07f"></div><div class="abs" style="left:50px;top:504px;width:1px;height:22px;background:#7fd07f"></div><div class="abs" style="left:120px;top:504px;width:1px;height:22px;background:#7fd07f"></div><div class="abs" style="left:270px;top:504px;width:1px;height:22px;background:#7fd07f"></div><div class="abs" style="left:320px;top:504px;width:1px;height:22px;background:#7fd07f"></div><div class="abs" style="left:609px;top:504px;width:1px;height:22px;background:#7fd07f"></div><div class="abs" style="left:905px;top:504px;width:1px;height:22px;background:#7fd07f"></div><div class="t" style="left:4px;top:510px;font-size:11px;letter-spacing:-0.1px;color:#0b2a0b;width:45px;overflow:hidden">SCPT</div><div class="t" style="left:124px;top:510px;font-size:11px;letter-spacing:-0.1px;color:#0b2a0b;width:145px;overflow:hidden">trAddAnimalProductsTopicS...</div><div class="t" style="left:274px;top:510px;font-size:11px;letter-spacing:-0.1px;color:#0b2a0b;width:45px;overflow:hidden">DIAL</div><div class="t" style="left:324px;top:510px;font-size:11px;letter-spacing:-0.2px;color:#0b2a0b;width:284px;overflow:hidden">netch leather</div><div class="t" style="left:613px;top:510px;font-size:11px;letter-spacing:-0.1px;color:#0b2a0b;width:291px;overflow:hidden">Cuir de netch</div><div class="abs" style="left:905px;top:504px;width:21px;height:21px;background:#008000;border:1px solid #226a22"></div><div class="abs" style="left:905px;top:525px;width:21px;height:1px;background:#7fd07f"></div><div class="abs" style="left:926px;top:504px;width:23px;height:22px;background:#d9a848;border:1px solid #c89838;border-bottom-color:#c8923a"></div><div class="abs" style="left:907px;top:506px;width:17px;height:18px;border-radius:2px;border:1px solid #f4f4f4;background:linear-gradient(#fdfdfd,#e8e8ea 50%,#d6d6da)"></div><div class="abs" style="left:929px;top:506px;width:18px;height:18px;border-radius:2px;border:1px solid #b08838;background:linear-gradient(#fdfdfd,#e8e8ea 50%,#d6d6da)"></div><div class="t" style="left:911px;top:510px;font-size:12.5px;font-weight:bold;color:#000;-webkit-text-stroke:0.3px #000">V</div><div class="t" style="left:934px;top:510px;font-size:12.5px;font-weight:bold;color:#000;-webkit-text-stroke:0.3px #000">X</div><div class="abs" style="left:0;top:526px;width:951px;height:22px;background:#008000"></div><div class="abs" style="left:0;top:547px;width:951px;height:1px;background:#7fd07f"></div><div class="abs" style="left:50px;top:526px;width:1px;height:22px;background:#7fd07f"></div><div class="abs" style="left:120px;top:526px;width:1px;height:22px;background:#7fd07f"></div><div class="abs" style="left:270px;top:526px;width:1px;height:22px;background:#7fd07f"></div><div class="abs" style="left:320px;top:526px;width:1px;height:22px;background:#7fd07f"></div><div class="abs" style="left:609px;top:526px;width:1px;height:22px;background:#7fd07f"></div><div class="abs" style="left:905px;top:526px;width:1px;height:22px;background:#7fd07f"></div><div class="t" style="left:4px;top:532px;font-size:11px;letter-spacing:-0.1px;color:#0b2a0b;width:45px;overflow:hidden">SCPT</div><div class="t" style="left:124px;top:532px;font-size:11px;letter-spacing:-0.1px;color:#0b2a0b;width:145px;overflow:hidden">trAddAnimalProductsTopicS...</div><div class="t" style="left:274px;top:532px;font-size:11px;letter-spacing:-0.1px;color:#0b2a0b;width:45px;overflow:hidden">DIAL</div><div class="t" style="left:324px;top:532px;font-size:11px;letter-spacing:-0.2px;color:#0b2a0b;width:284px;overflow:hidden">racer plumes</div><div class="t" style="left:613px;top:532px;font-size:11px;letter-spacing:-0.1px;color:#0b2a0b;width:291px;overflow:hidden">Plumes de braillard</div><div class="abs" style="left:905px;top:526px;width:21px;height:21px;background:#008000;border:1px solid #226a22"></div><div class="abs" style="left:905px;top:547px;width:21px;height:1px;background:#7fd07f"></div><div class="abs" style="left:926px;top:526px;width:23px;height:22px;background:#d9a848;border:1px solid #c89838;border-bottom-color:#c8923a"></div><div class="abs" style="left:907px;top:528px;width:17px;height:18px;border-radius:2px;border:1px solid #f4f4f4;background:linear-gradient(#fdfdfd,#e8e8ea 50%,#d6d6da)"></div><div class="abs" style="left:929px;top:528px;width:18px;height:18px;border-radius:2px;border:1px solid #b08838;background:linear-gradient(#fdfdfd,#e8e8ea 50%,#d6d6da)"></div><div class="t" style="left:911px;top:532px;font-size:12.5px;font-weight:bold;color:#000;-webkit-text-stroke:0.3px #000">V</div><div class="t" style="left:934px;top:532px;font-size:12.5px;font-weight:bold;color:#000;-webkit-text-stroke:0.3px #000">X</div><div class="abs" style="left:0;top:548px;width:951px;height:22px;background:#008000"></div><div class="abs" style="left:0;top:569px;width:951px;height:1px;background:#7fd07f"></div><div class="abs" style="left:50px;top:548px;width:1px;height:22px;background:#7fd07f"></div><div class="abs" style="left:120px;top:548px;width:1px;height:22px;background:#7fd07f"></div><div class="abs" style="left:270px;top:548px;width:1px;height:22px;background:#7fd07f"></div><div class="abs" style="left:320px;top:548px;width:1px;height:22px;background:#7fd07f"></div><div class="abs" style="left:609px;top:548px;width:1px;height:22px;background:#7fd07f"></div><div class="abs" style="left:905px;top:548px;width:1px;height:22px;background:#7fd07f"></div><div class="t" style="left:4px;top:554px;font-size:11px;letter-spacing:-0.1px;color:#0b2a0b;width:45px;overflow:hidden">SCPT</div><div class="t" style="left:124px;top:554px;font-size:11px;letter-spacing:-0.1px;color:#0b2a0b;width:145px;overflow:hidden">trAddAnimalProductsTopicS...</div><div class="t" style="left:274px;top:554px;font-size:11px;letter-spacing:-0.1px;color:#0b2a0b;width:45px;overflow:hidden">DIAL</div><div class="t" style="left:324px;top:554px;font-size:11px;letter-spacing:-0.2px;color:#0b2a0b;width:284px;overflow:hidden">rat meat</div><div class="t" style="left:613px;top:554px;font-size:11px;letter-spacing:-0.1px;color:#0b2a0b;width:291px;overflow:hidden">Viande de rat</div><div class="abs" style="left:905px;top:548px;width:21px;height:21px;background:#008000;border:1px solid #226a22"></div><div class="abs" style="left:905px;top:569px;width:21px;height:1px;background:#7fd07f"></div><div class="abs" style="left:926px;top:548px;width:23px;height:22px;background:#d9a848;border:1px solid #c89838;border-bottom-color:#c8923a"></div><div class="abs" style="left:907px;top:550px;width:17px;height:18px;border-radius:2px;border:1px solid #f4f4f4;background:linear-gradient(#fdfdfd,#e8e8ea 50%,#d6d6da)"></div><div class="abs" style="left:929px;top:550px;width:18px;height:18px;border-radius:2px;border:1px solid #b08838;background:linear-gradient(#fdfdfd,#e8e8ea 50%,#d6d6da)"></div><div class="t" style="left:911px;top:554px;font-size:12.5px;font-weight:bold;color:#000;-webkit-text-stroke:0.3px #000">V</div><div class="t" style="left:934px;top:554px;font-size:12.5px;font-weight:bold;color:#000;-webkit-text-stroke:0.3px #000">X</div><div class="abs" style="left:0;top:570px;width:951px;height:22px;background:#008000"></div><div class="abs" style="left:0;top:591px;width:951px;height:1px;background:#7fd07f"></div><div class="abs" style="left:50px;top:570px;width:1px;height:22px;background:#7fd07f"></div><div class="abs" style="left:120px;top:570px;width:1px;height:22px;background:#7fd07f"></div><div class="abs" style="left:270px;top:570px;width:1px;height:22px;background:#7fd07f"></div><div class="abs" style="left:320px;top:570px;width:1px;height:22px;background:#7fd07f"></div><div class="abs" style="left:609px;top:570px;width:1px;height:22px;background:#7fd07f"></div><div class="abs" style="left:905px;top:570px;width:1px;height:22px;background:#7fd07f"></div><div class="t" style="left:4px;top:576px;font-size:11px;letter-spacing:-0.1px;color:#0b2a0b;width:45px;overflow:hidden">SCPT</div><div class="t" style="left:124px;top:576px;font-size:11px;letter-spacing:-0.1px;color:#0b2a0b;width:145px;overflow:hidden">trAddAnimalProductsTopicS...</div><div class="t" style="left:274px;top:576px;font-size:11px;letter-spacing:-0.1px;color:#0b2a0b;width:45px;overflow:hidden">DIAL</div><div class="t" style="left:324px;top:576px;font-size:11px;letter-spacing:-0.2px;color:#0b2a0b;width:284px;overflow:hidden">scales</div><div class="t" style="left:613px;top:576px;font-size:11px;letter-spacing:-0.1px;color:#0b2a0b;width:291px;overflow:hidden">Ecailles</div><div class="abs" style="left:905px;top:570px;width:21px;height:21px;background:#008000;border:1px solid #226a22"></div><div class="abs" style="left:905px;top:591px;width:21px;height:1px;background:#7fd07f"></div><div class="abs" style="left:926px;top:570px;width:23px;height:22px;background:#d9a848;border:1px solid #c89838;border-bottom-color:#c8923a"></div><div class="abs" style="left:907px;top:572px;width:17px;height:18px;border-radius:2px;border:1px solid #f4f4f4;background:linear-gradient(#fdfdfd,#e8e8ea 50%,#d6d6da)"></div><div class="abs" style="left:929px;top:572px;width:18px;height:18px;border-radius:2px;border:1px solid #b08838;background:linear-gradient(#fdfdfd,#e8e8ea 50%,#d6d6da)"></div><div class="t" style="left:911px;top:576px;font-size:12.5px;font-weight:bold;color:#000;-webkit-text-stroke:0.3px #000">V</div><div class="t" style="left:934px;top:576px;font-size:12.5px;font-weight:bold;color:#000;-webkit-text-stroke:0.3px #000">X</div><div class="abs" style="left:0;top:592px;width:951px;height:22px;background:#008000"></div><div class="abs" style="left:0;top:613px;width:951px;height:1px;background:#7fd07f"></div><div class="abs" style="left:50px;top:592px;width:1px;height:22px;background:#7fd07f"></div><div class="abs" style="left:120px;top:592px;width:1px;height:22px;background:#7fd07f"></div><div class="abs" style="left:270px;top:592px;width:1px;height:22px;background:#7fd07f"></div><div class="abs" style="left:320px;top:592px;width:1px;height:22px;background:#7fd07f"></div><div class="abs" style="left:609px;top:592px;width:1px;height:22px;background:#7fd07f"></div><div class="abs" style="left:905px;top:592px;width:1px;height:22px;background:#7fd07f"></div><div class="t" style="left:4px;top:598px;font-size:11px;letter-spacing:-0.1px;color:#0b2a0b;width:45px;overflow:hidden">SCPT</div><div class="t" style="left:124px;top:598px;font-size:11px;letter-spacing:-0.1px;color:#0b2a0b;width:145px;overflow:hidden">trAddAnimalProductsTopicS...</div><div class="t" style="left:274px;top:598px;font-size:11px;letter-spacing:-0.1px;color:#0b2a0b;width:45px;overflow:hidden">DIAL</div><div class="t" style="left:324px;top:598px;font-size:11px;letter-spacing:-0.2px;color:#0b2a0b;width:284px;overflow:hidden">scrib jelly</div><div class="t" style="left:613px;top:598px;font-size:11px;letter-spacing:-0.1px;color:#0b2a0b;width:291px;overflow:hidden">Gelée de scrib</div><div class="abs" style="left:905px;top:592px;width:21px;height:21px;background:#008000;border:1px solid #226a22"></div><div class="abs" style="left:905px;top:613px;width:21px;height:1px;background:#7fd07f"></div><div class="abs" style="left:926px;top:592px;width:23px;height:22px;background:#d9a848;border:1px solid #c89838;border-bottom-color:#c8923a"></div><div class="abs" style="left:907px;top:594px;width:17px;height:18px;border-radius:2px;border:1px solid #f4f4f4;background:linear-gradient(#fdfdfd,#e8e8ea 50%,#d6d6da)"></div><div class="abs" style="left:929px;top:594px;width:18px;height:18px;border-radius:2px;border:1px solid #b08838;background:linear-gradient(#fdfdfd,#e8e8ea 50%,#d6d6da)"></div><div class="t" style="left:911px;top:598px;font-size:12.5px;font-weight:bold;color:#000;-webkit-text-stroke:0.3px #000">V</div><div class="t" style="left:934px;top:598px;font-size:12.5px;font-weight:bold;color:#000;-webkit-text-stroke:0.3px #000">X</div><div class="abs" style="left:0;top:614px;width:951px;height:22px;background:#008000"></div><div class="abs" style="left:0;top:635px;width:951px;height:1px;background:#7fd07f"></div><div class="abs" style="left:50px;top:614px;width:1px;height:22px;background:#7fd07f"></div><div class="abs" style="left:120px;top:614px;width:1px;height:22px;background:#7fd07f"></div><div class="abs" style="left:270px;top:614px;width:1px;height:22px;background:#7fd07f"></div><div class="abs" style="left:320px;top:614px;width:1px;height:22px;background:#7fd07f"></div><div class="abs" style="left:609px;top:614px;width:1px;height:22px;background:#7fd07f"></div><div class="abs" style="left:905px;top:614px;width:1px;height:22px;background:#7fd07f"></div><div class="t" style="left:4px;top:620px;font-size:11px;letter-spacing:-0.1px;color:#0b2a0b;width:45px;overflow:hidden">SCPT</div><div class="t" style="left:124px;top:620px;font-size:11px;letter-spacing:-0.1px;color:#0b2a0b;width:145px;overflow:hidden">trAddAnimalProductsTopicS...</div><div class="t" style="left:274px;top:620px;font-size:11px;letter-spacing:-0.1px;color:#0b2a0b;width:45px;overflow:hidden">DIAL</div><div class="t" style="left:324px;top:620px;font-size:11px;letter-spacing:-0.2px;color:#0b2a0b;width:284px;overflow:hidden">scrib jerky</div><div class="t" style="left:613px;top:620px;font-size:11px;letter-spacing:-0.1px;color:#0b2a0b;width:291px;overflow:hidden">Viande de scrib salée</div><div class="abs" style="left:905px;top:614px;width:21px;height:21px;background:#008000;border:1px solid #226a22"></div><div class="abs" style="left:905px;top:635px;width:21px;height:1px;background:#7fd07f"></div><div class="abs" style="left:926px;top:614px;width:23px;height:22px;background:#d9a848;border:1px solid #c89838;border-bottom-color:#c8923a"></div><div class="abs" style="left:907px;top:616px;width:17px;height:18px;border-radius:2px;border:1px solid #f4f4f4;background:linear-gradient(#fdfdfd,#e8e8ea 50%,#d6d6da)"></div><div class="abs" style="left:929px;top:616px;width:18px;height:18px;border-radius:2px;border:1px solid #b08838;background:linear-gradient(#fdfdfd,#e8e8ea 50%,#d6d6da)"></div><div class="t" style="left:911px;top:620px;font-size:12.5px;font-weight:bold;color:#000;-webkit-text-stroke:0.3px #000">V</div><div class="t" style="left:934px;top:620px;font-size:12.5px;font-weight:bold;color:#000;-webkit-text-stroke:0.3px #000">X</div><div class="abs" style="left:0;top:636px;width:951px;height:22px;background:#008000"></div><div class="abs" style="left:0;top:657px;width:951px;height:1px;background:#7fd07f"></div><div class="abs" style="left:50px;top:636px;width:1px;height:22px;background:#7fd07f"></div><div class="abs" style="left:120px;top:636px;width:1px;height:22px;background:#7fd07f"></div><div class="abs" style="left:270px;top:636px;width:1px;height:22px;background:#7fd07f"></div><div class="abs" style="left:320px;top:636px;width:1px;height:22px;background:#7fd07f"></div><div class="abs" style="left:609px;top:636px;width:1px;height:22px;background:#7fd07f"></div><div class="abs" style="left:905px;top:636px;width:1px;height:22px;background:#7fd07f"></div><div class="t" style="left:4px;top:642px;font-size:11px;letter-spacing:-0.1px;color:#0b2a0b;width:45px;overflow:hidden">SCPT</div><div class="t" style="left:124px;top:642px;font-size:11px;letter-spacing:-0.1px;color:#0b2a0b;width:145px;overflow:hidden">trAddAnimalProductsTopicS...</div><div class="t" style="left:274px;top:642px;font-size:11px;letter-spacing:-0.1px;color:#0b2a0b;width:45px;overflow:hidden">DIAL</div><div class="t" style="left:324px;top:642px;font-size:11px;letter-spacing:-0.2px;color:#0b2a0b;width:284px;overflow:hidden">shalk resin</div><div class="t" style="left:613px;top:642px;font-size:11px;letter-spacing:-0.1px;color:#0b2a0b;width:291px;overflow:hidden">Résine de shalk</div><div class="abs" style="left:905px;top:636px;width:21px;height:21px;background:#008000;border:1px solid #226a22"></div><div class="abs" style="left:905px;top:657px;width:21px;height:1px;background:#7fd07f"></div><div class="abs" style="left:926px;top:636px;width:23px;height:22px;background:#d9a848;border:1px solid #c89838;border-bottom-color:#c8923a"></div><div class="abs" style="left:907px;top:638px;width:17px;height:18px;border-radius:2px;border:1px solid #f4f4f4;background:linear-gradient(#fdfdfd,#e8e8ea 50%,#d6d6da)"></div><div class="abs" style="left:929px;top:638px;width:18px;height:18px;border-radius:2px;border:1px solid #b08838;background:linear-gradient(#fdfdfd,#e8e8ea 50%,#d6d6da)"></div><div class="t" style="left:911px;top:642px;font-size:12.5px;font-weight:bold;color:#000;-webkit-text-stroke:0.3px #000">V</div><div class="t" style="left:934px;top:642px;font-size:12.5px;font-weight:bold;color:#000;-webkit-text-stroke:0.3px #000">X</div><div class="abs" style="left:949px;top:20px;width:1px;height:640px;background:#3a8a3a"></div><div class="abs" style="left:950px;top:20px;width:1px;height:640px;background:#e8f4e8"></div><div class="abs" style="left:951px;top:0;width:17px;height:642px;background:linear-gradient(90deg,#e8e8e8,#f4f4f4 40%,#f0f0f0)"></div><svg class="abs" style="left:951px;top:0px" width="17" height="17"><path d="M4.5 11 L8.5 7 L12.5 11 Z" fill="#444"/></svg><svg class="abs" style="left:951px;top:624px" width="17" height="17"><path d="M4.5 6 L8.5 10 L12.5 6 Z" fill="#444"/></svg><div class="abs" style="left:952px;top:607px;width:15px;height:15px;border:1px solid #9a9a9a;border-radius:2px;background:linear-gradient(90deg,#f2f2f2,#dcdcdc)"></div></div><div class="abs" style="left:165px;top:365px;width:962px;height:27px;border:5px solid #e8202a"></div><div class="abs" style="left:183px;top:401px;width:871px;height:374px;border:5px solid #e8202a;border-radius:18px"></div><div class="abs" style="left:163px;top:797px;width:972px;height:157px;border:1px solid #8a8a8a;border-bottom:none;background:#fff"></div><div class="abs" style="left:166px;top:804px;width:967px;height:144px;border:1px solid #dcdcdc;border-radius:2px"></div><div class="abs" style="left:170px;top:798px;width:97px;height:13px;background:#fff"></div><div class="t" style="left:173px;top:799px;font-size:11.5px;letter-spacing:-0.35px">Lignes du mod liées</div><div class="abs" style="left:167px;top:814px;width:964px;height:132px;border:1px solid #000;border-top-width:1px;background:#ababab;overflow:hidden"><div class="abs" style="left:0;top:0px;width:905px;height:22px;background:#ffa500"></div><div class="abs" style="left:0;top:0px;width:50px;height:22px;background:#3399ff"></div><div class="abs" style="left:0;top:21px;width:905px;height:1px;background:#e8b060"></div><div class="abs" style="left:50px;top:0px;width:1px;height:22px;background:#e8b060"></div><div class="abs" style="left:120px;top:0px;width:1px;height:22px;background:#e8b060"></div><div class="abs" style="left:270px;top:0px;width:1px;height:22px;background:#e8b060"></div><div class="abs" style="left:320px;top:0px;width:1px;height:22px;background:#e8b060"></div><div class="abs" style="left:610px;top:0px;width:1px;height:22px;background:#e8b060"></div><div class="t" style="left:4px;top:6px;font-size:11px;letter-spacing:-0.15px;color:#fff;width:45px;overflow:hidden">SCPT</div><div class="t" style="left:124px;top:6px;font-size:11px;letter-spacing:-0.15px;color:#2a1a00;width:145px;overflow:hidden">trAddAnimalProductsTopicS...</div><div class="t" style="left:274px;top:6px;font-size:11px;letter-spacing:-0.15px;color:#2a1a00;width:45px;overflow:hidden">SCTX</div><div class="t" style="left:324px;top:6px;font-size:11px;letter-spacing:-0.15px;color:#2a1a00;width:285px;overflow:hidden">begin trAddAnimalProductsTopicScript; easier to maintain ...</div><div class="t" style="left:613px;top:6px;font-size:11px;letter-spacing:-0.15px;color:#2a1a00;width:291px;overflow:hidden">begin trAddAnimalProductsTopicScript; easier to maintain /...</div><div class="abs" style="left:0;top:22px;width:905px;height:22px;background:#008000"></div><div class="abs" style="left:0;top:43px;width:905px;height:1px;background:#7fd07f"></div><div class="abs" style="left:50px;top:22px;width:1px;height:22px;background:#7fd07f"></div><div class="abs" style="left:120px;top:22px;width:1px;height:22px;background:#7fd07f"></div><div class="abs" style="left:270px;top:22px;width:1px;height:22px;background:#7fd07f"></div><div class="abs" style="left:320px;top:22px;width:1px;height:22px;background:#7fd07f"></div><div class="abs" style="left:610px;top:22px;width:1px;height:22px;background:#7fd07f"></div><div class="t" style="left:4px;top:28px;font-size:11px;letter-spacing:-0.15px;color:#0b2a0b;width:45px;overflow:hidden">SCPT</div><div class="t" style="left:124px;top:28px;font-size:11px;letter-spacing:-0.15px;color:#0b2a0b;width:145px;overflow:hidden">trAddAnimalProductsTopicS...</div><div class="t" style="left:274px;top:28px;font-size:11px;letter-spacing:-0.15px;color:#0b2a0b;width:45px;overflow:hidden">DIAL</div><div class="t" style="left:324px;top:28px;font-size:11px;letter-spacing:-0.15px;color:#0b2a0b;width:285px;overflow:hidden">alit meat</div><div class="t" style="left:613px;top:28px;font-size:11px;letter-spacing:-0.15px;color:#0b2a0b;width:291px;overflow:hidden">Viande d&#x27;alit</div><div class="abs" style="left:0;top:44px;width:905px;height:22px;background:#008000"></div><div class="abs" style="left:0;top:65px;width:905px;height:1px;background:#7fd07f"></div><div class="abs" style="left:50px;top:44px;width:1px;height:22px;background:#7fd07f"></div><div class="abs" style="left:120px;top:44px;width:1px;height:22px;background:#7fd07f"></div><div class="abs" style="left:270px;top:44px;width:1px;height:22px;background:#7fd07f"></div><div class="abs" style="left:320px;top:44px;width:1px;height:22px;background:#7fd07f"></div><div class="abs" style="left:610px;top:44px;width:1px;height:22px;background:#7fd07f"></div><div class="t" style="left:4px;top:50px;font-size:11px;letter-spacing:-0.15px;color:#0b2a0b;width:45px;overflow:hidden">SCPT</div><div class="t" style="left:124px;top:50px;font-size:11px;letter-spacing:-0.15px;color:#0b2a0b;width:145px;overflow:hidden">trAddAnimalProductsTopicS...</div><div class="t" style="left:274px;top:50px;font-size:11px;letter-spacing:-0.15px;color:#0b2a0b;width:45px;overflow:hidden">DIAL</div><div class="t" style="left:324px;top:50px;font-size:11px;letter-spacing:-0.15px;color:#0b2a0b;width:285px;overflow:hidden">beetle shell</div><div class="t" style="left:613px;top:50px;font-size:11px;letter-spacing:-0.15px;color:#0b2a0b;width:291px;overflow:hidden">Carapace de scarabée</div><div class="abs" style="left:0;top:66px;width:905px;height:22px;background:#008000"></div><div class="abs" style="left:0;top:87px;width:905px;height:1px;background:#7fd07f"></div><div class="abs" style="left:50px;top:66px;width:1px;height:22px;background:#7fd07f"></div><div class="abs" style="left:120px;top:66px;width:1px;height:22px;background:#7fd07f"></div><div class="abs" style="left:270px;top:66px;width:1px;height:22px;background:#7fd07f"></div><div class="abs" style="left:320px;top:66px;width:1px;height:22px;background:#7fd07f"></div><div class="abs" style="left:610px;top:66px;width:1px;height:22px;background:#7fd07f"></div><div class="t" style="left:4px;top:72px;font-size:11px;letter-spacing:-0.15px;color:#0b2a0b;width:45px;overflow:hidden">SCPT</div><div class="t" style="left:124px;top:72px;font-size:11px;letter-spacing:-0.15px;color:#0b2a0b;width:145px;overflow:hidden">trAddAnimalProductsTopicS...</div><div class="t" style="left:274px;top:72px;font-size:11px;letter-spacing:-0.15px;color:#0b2a0b;width:45px;overflow:hidden">DIAL</div><div class="t" style="left:324px;top:72px;font-size:11px;letter-spacing:-0.15px;color:#0b2a0b;width:285px;overflow:hidden">cephalopod shell</div><div class="t" style="left:613px;top:72px;font-size:11px;letter-spacing:-0.15px;color:#0b2a0b;width:291px;overflow:hidden">Coquille de céphalopode</div><div class="abs" style="left:0;top:88px;width:905px;height:22px;background:#008000"></div><div class="abs" style="left:0;top:109px;width:905px;height:1px;background:#7fd07f"></div><div class="abs" style="left:50px;top:88px;width:1px;height:22px;background:#7fd07f"></div><div class="abs" style="left:120px;top:88px;width:1px;height:22px;background:#7fd07f"></div><div class="abs" style="left:270px;top:88px;width:1px;height:22px;background:#7fd07f"></div><div class="abs" style="left:320px;top:88px;width:1px;height:22px;background:#7fd07f"></div><div class="abs" style="left:610px;top:88px;width:1px;height:22px;background:#7fd07f"></div><div class="t" style="left:4px;top:94px;font-size:11px;letter-spacing:-0.15px;color:#0b2a0b;width:45px;overflow:hidden">SCPT</div><div class="t" style="left:124px;top:94px;font-size:11px;letter-spacing:-0.15px;color:#0b2a0b;width:145px;overflow:hidden">trAddAnimalProductsTopicS...</div><div class="t" style="left:274px;top:94px;font-size:11px;letter-spacing:-0.15px;color:#0b2a0b;width:45px;overflow:hidden">DIAL</div><div class="t" style="left:324px;top:94px;font-size:11px;letter-spacing:-0.15px;color:#0b2a0b;width:285px;overflow:hidden">crab meat</div><div class="t" style="left:613px;top:94px;font-size:11px;letter-spacing:-0.15px;color:#0b2a0b;width:291px;overflow:hidden">Chair de crabe</div><div class="abs" style="left:0;top:110px;width:905px;height:22px;background:#008000"></div><div class="abs" style="left:0;top:131px;width:905px;height:1px;background:#7fd07f"></div><div class="abs" style="left:50px;top:110px;width:1px;height:22px;background:#7fd07f"></div><div class="abs" style="left:120px;top:110px;width:1px;height:22px;background:#7fd07f"></div><div class="abs" style="left:270px;top:110px;width:1px;height:22px;background:#7fd07f"></div><div class="abs" style="left:320px;top:110px;width:1px;height:22px;background:#7fd07f"></div><div class="abs" style="left:610px;top:110px;width:1px;height:22px;background:#7fd07f"></div><div class="t" style="left:4px;top:116px;font-size:11px;letter-spacing:-0.15px;color:#0b2a0b;width:45px;overflow:hidden">SCPT</div><div class="t" style="left:124px;top:116px;font-size:11px;letter-spacing:-0.15px;color:#0b2a0b;width:145px;overflow:hidden">trAddAnimalProductsTopicS...</div><div class="t" style="left:274px;top:116px;font-size:11px;letter-spacing:-0.15px;color:#0b2a0b;width:45px;overflow:hidden">DIAL</div><div class="t" style="left:324px;top:116px;font-size:11px;letter-spacing:-0.15px;color:#0b2a0b;width:285px;overflow:hidden">durzog meat</div><div class="t" style="left:613px;top:116px;font-size:11px;letter-spacing:-0.15px;color:#0b2a0b;width:291px;overflow:hidden">Chair de durzog</div><div class="abs" style="left:945px;top:0;width:17px;height:131px;background:linear-gradient(90deg,#e8e8e8,#f4f4f4 40%,#f0f0f0)"></div><svg class="abs" style="left:945px;top:1px" width="17" height="17"><path d="M4.5 11 L8.5 7 L12.5 11 Z" fill="#444"/></svg><svg class="abs" style="left:945px;top:113px" width="17" height="17"><path d="M4.5 6 L8.5 10 L12.5 6 Z" fill="#444"/></svg><div class="abs" style="left:946px;top:18px;width:15px;height:24px;border:1px solid #9a9a9a;border-radius:2px;background:linear-gradient(90deg,#f6f6f6,#dedede)"></div><div class="abs" style="left:950px;top:26px;width:7px;height:7px;border-top:1px solid #555;border-bottom:1px solid #555"></div><div class="abs" style="left:950px;top:29px;width:7px;height:1px;background:#555"></div></div><div class="abs" style="left:163px;top:953px;width:481px;height:68px;border:1px solid #6e6e6e;background:#fff"></div><div class="abs" style="left:165px;top:960px;width:477px;height:58px;border:1px solid #dcdcdc;border-radius:2px"></div><div class="abs" style="left:171px;top:954px;width:71px;height:13px;background:#fff"></div><div class="t" style="left:174px;top:955px;font-size:11.5px;letter-spacing:-0.35px">Texte Original</div><div class="abs" style="left:167px;top:970px;width:473px;height:47px;border:1px solid #a5a5a5;border-right-color:#dadada;border-bottom-color:#dadada;background:#f0f0f0"></div><div class="abs" style="left:622px;top:971px;width:17px;height:45px;background:#e9e9e9"></div><svg class="abs" style="left:622px;top:972px" width="17" height="17"><path d="M5 11 L8.5 7.5 L12 11 Z" fill="#888"/></svg><svg class="abs" style="left:622px;top:998px" width="17" height="17"><path d="M5 7 L8.5 10.5 L12 7 Z" fill="#888"/></svg><div class="t" style="left:175px;top:976px;font-family:'Liberation Serif',serif;font-size:15px;color:#000">alit hide</div><div class="abs" style="left:648px;top:953px;width:486px;height:68px;border:1px solid #6e6e6e;background:#fff"></div><div class="abs" style="left:650px;top:960px;width:482px;height:58px;border:1px solid #dcdcdc;border-radius:2px"></div><div class="abs" style="left:656px;top:954px;width:66px;height:13px;background:#fff"></div><div class="t" style="left:659px;top:955px;font-size:11.5px;letter-spacing:-0.35px">Texte Traduit</div><div class="abs" style="left:652px;top:970px;width:478px;height:47px;border:1px solid #a5a5a5;border-right-color:#dadada;border-bottom-color:#dadada;background:#fff"></div><div class="abs" style="left:1112px;top:971px;width:17px;height:45px;background:#f0f0f0"></div><svg class="abs" style="left:1112px;top:972px" width="17" height="17"><path d="M5 11 L8.5 7.5 L12 11 Z" fill="#888"/></svg><svg class="abs" style="left:1112px;top:998px" width="17" height="17"><path d="M5 7 L8.5 10.5 L12 7 Z" fill="#888"/></svg><div class="t" style="left:660px;top:976px;font-family:'Liberation Serif',serif;font-size:15px;color:#000">peau d&#x27;alit</div><div class="abs" style="left:163px;top:1020px;width:972px;height:62px;border:1px solid #8a8a8a;border-top:none"></div><div class="abs" style="left:165px;top:1031px;width:968px;height:49px;border:1px solid #dcdcdc;border-radius:2px"></div><div class="abs" style="left:170px;top:1025px;width:63px;height:13px;background:#fff"></div><div class="t" style="left:173px;top:1026px;font-size:11.5px;letter-spacing:-0.35px">Suggestions</div><div class="abs" style="left:167px;top:1041px;width:964px;height:37px;border:1px solid #000;background:#fff;overflow:hidden"><div class="abs" style="left:0;top:0;width:946px;height:22px;background:#3399ff"></div><div class="abs" style="left:0;top:22px;width:946px;height:14px;background:#fff"></div><div class="abs" style="left:5px;top:3px;width:468px;height:19px;overflow:hidden"><div class="t" style="left:0;top:0;font-size:11px;letter-spacing:-0.2px;color:#fff">ANARA:  Please, serjo, go wherever you want. We have nothing to hide. We’re loyal Imperial</div></div><div class="abs" style="left:5px;top:17px;width:468px;height:5px;overflow:hidden"><div class="t" style="left:0;top:0;font-size:11px;letter-spacing:-0.2px;color:#fff">subjects.</div></div><div class="abs" style="left:477px;top:3px;width:469px;height:19px;overflow:hidden"><div class="t" style="left:0;top:0;font-size:11px;letter-spacing:-0.2px;color:#fff">ANARA :  Je vous en prie, serjo, faites comme chez vous. Nous n’avons rien à cacher. Nous</div></div><div class="abs" style="left:477px;top:17px;width:469px;height:5px;overflow:hidden"><div class="t" style="left:0;top:0;font-size:11px;letter-spacing:-0.2px;color:#fff">sommes de loyaux sujets de sa majesté.</div></div><div class="abs" style="left:5px;top:25px;width:468px;height:11px;overflow:hidden"><div class="t" style="left:0;top:0;font-size:11px;letter-spacing:-0.2px;color:#000">The Grace of Daring: Thank you for your daring, Lord Vivec. I shall not shun risk, nor hide behind</div></div><div class="abs" style="left:477px;top:25px;width:469px;height:11px;overflow:hidden"><div class="t" style="left:0;top:0;font-size:11px;letter-spacing:-0.2px;color:#000">La grâce de l’audace : merci de l’audace que vous me donnez, seigneur Vivec. Je ne refuserai</div></div><div class="abs" style="left:473px;top:0;width:1px;height:36px;background:#d8d8d8"></div><div class="abs" style="left:946px;top:0;width:17px;height:36px;background:#f0f0f0"></div><svg class="abs" style="left:946px;top:1px" width="17" height="17"><path d="M5 11 L8.5 7.5 L12 11 Z" fill="#444"/></svg><svg class="abs" style="left:946px;top:19px" width="17" height="17"><path d="M5 7 L8.5 10.5 L12 7 Z" fill="#444"/></svg></div><div class="abs" style="left:15px;top:1083px;width:1125px;height:20px;background:#edebea"></div><div class="abs" style="left:1123px;top:1099px;width:2px;height:2px;background:#b8b8b8"></div><div class="abs" style="left:1127px;top:1099px;width:2px;height:2px;background:#b8b8b8"></div><div class="abs" style="left:1131px;top:1099px;width:2px;height:2px;background:#b8b8b8"></div><div class="abs" style="left:1127px;top:1095px;width:2px;height:2px;background:#b8b8b8"></div><div class="abs" style="left:1131px;top:1095px;width:2px;height:2px;background:#b8b8b8"></div><div class="abs" style="left:1131px;top:1091px;width:2px;height:2px;background:#b8b8b8"></div><div class="t" style="left:790px;top:1088px;font-size:12px;letter-spacing:-0.2px;color:#000">Lignes non vides :   2348</div><div class="t" style="left:948px;top:1088px;font-size:12px;letter-spacing:-0.25px;color:#000">Lignes Traduites :   2346  /  2805</div><div class="abs" style="left:8px;top:1103px;width:1133px;height:6px;background:#fff;border-bottom:1px solid #8a8a8a"></div><div class="abs" style="left:0;top:1110px;width:1149px;height:7px;background:linear-gradient(90deg,#9a968c,#7c786e 15%,#6e6a5f 30%,#8c7a60 45%,#a09070 60%,#8a8a78 75%,#b0b0a0 90%,#7a7a70)"></div><div class="abs" style="left:10px;top:57px;width:1px;height:30px;background:#c8c8c8"></div><div class="abs" style="left:125px;top:56px;width:1px;height:32px;background:#b8b8b8;box-shadow:1px 0 0 #fff"></div><div class="abs" style="left:166px;top:56px;width:1px;height:32px;background:#b8b8b8;box-shadow:1px 0 0 #fff"></div><div class="abs" style="left:280px;top:56px;width:1px;height:32px;background:#b8b8b8;box-shadow:1px 0 0 #fff"></div><div class="abs" style="left:466px;top:56px;width:1px;height:32px;background:#b8b8b8;box-shadow:1px 0 0 #fff"></div><svg class="abs" style="left:14px;top:54px" width="34" height="34" viewBox="0 0 34 34">
<defs><linearGradient id="fo" x1="0" y1="0" x2="0" y2="1"><stop offset="0" stop-color="#ffe680"/><stop offset="1" stop-color="#f2b705"/></linearGradient></defs>
<path d="M1 9 L10 9 L12 11 L26 11 L26 31 L1 31 Z" fill="#f5cf50" stroke="#c89a20" stroke-width="1"/>
<path d="M5 17 L33 17 L27 32 L1 32 Z" fill="url(#fo)" stroke="#c89a20" stroke-width="1"/>
<path d="M12 10 C13 3, 22 1, 27 6" fill="none" stroke="#5cc840" stroke-width="3.5"/>
<path d="M23 4 L31 5 L27 12 Z" fill="#4ab030"/>
</svg><svg class="abs" style="left:50px;top:54px" width="32" height="32" viewBox="0 0 32 32">
<defs><radialGradient id="ga" cx="0.4" cy="0.3" r="0.8"><stop offset="0" stop-color="#7fe070"/><stop offset="0.6" stop-color="#25a020"/><stop offset="1" stop-color="#0d6e10"/></radialGradient></defs>
<circle cx="16" cy="16" r="14.5" fill="url(#ga)" stroke="#0b5e0e" stroke-width="1"/>
<path d="M8 13.5 L16 13.5 L16 8.5 L24 16 L16 23.5 L16 18.5 L8 18.5 Z" fill="#f4fff0"/>
</svg><svg class="abs" style="left:87px;top:55px" width="32" height="32" viewBox="0 0 32 32">
<defs><radialGradient id="ge" cx="0.4" cy="0.35" r="0.8"><stop offset="0" stop-color="#f0f0f0"/><stop offset="1" stop-color="#9a9a9a"/></radialGradient></defs>
<polygon points="30.9,14.1 30.9,17.9 27.8,18.2 26.8,21.2 29.2,23.2 26.9,26.3 24.3,24.7 21.7,26.5 22.4,29.5 18.7,30.7 17.6,27.9 14.4,27.9 13.3,30.7 9.6,29.5 10.3,26.5 7.7,24.7 5.1,26.3 2.8,23.2 5.2,21.2 4.2,18.2 1.1,17.9 1.1,14.1 4.2,13.8 5.2,10.8 2.8,8.8 5.1,5.7 7.7,7.3 10.3,5.5 9.6,2.5 13.3,1.3 14.4,4.1 17.6,4.1 18.7,1.3 22.4,2.5 21.7,5.5 24.3,7.3 26.9,5.7 29.2,8.8 26.8,10.8 27.8,13.8" fill="url(#ge)" stroke="#8a8a8a" stroke-width="0.8"/>
<circle cx="16" cy="16" r="7" fill="none" stroke="#a8a8a8" stroke-width="3"/>
<circle cx="16" cy="16" r="4.5" fill="#f2f2f2"/>
</svg><svg class="abs" style="left:130px;top:52px" width="30" height="38" viewBox="0 0 30 38">
<defs><linearGradient id="dc" x1="0" x2="1"><stop offset="0" stop-color="#d8dde2"/><stop offset="0.5" stop-color="#f4f6f8"/><stop offset="1" stop-color="#c8ccd0"/></linearGradient>
<radialGradient id="ln" cx="0.4" cy="0.35" r="0.7"><stop offset="0" stop-color="#e8f6fc"/><stop offset="0.6" stop-color="#a8d4ea"/><stop offset="1" stop-color="#6aa0c0"/></radialGradient></defs>
<path d="M6 3 L22 5 L22 35 L6 34 Z" fill="url(#dc)" stroke="#b0b4b8" stroke-width="0.8"/>
<path d="M14 22 L20 22 L20 32 L14 31Z" fill="#a8aeb4" opacity="0.6"/>
<ellipse cx="16" cy="13" rx="8.5" ry="6.5" fill="url(#ln)" stroke="#7a98a8" stroke-width="1.6"/>
<path d="M11 19 L4 33" stroke="#5a3a1a" stroke-width="4.2" stroke-linecap="round"/>
<path d="M10 21 L5.5 30" stroke="#b08050" stroke-width="1.2" stroke-linecap="round"/>
</svg><svg class="abs" style="left:172px;top:52px" width="28" height="36" viewBox="0 0 28 36">
<defs><linearGradient id="fl172" x1="0" x2="1"><stop offset="0" stop-color="#6a6a6a"/><stop offset="0.2" stop-color="#9a9a9a"/><stop offset="0.8" stop-color="#a8a8a8"/><stop offset="1" stop-color="#7a7a7a"/></linearGradient></defs>
<path d="M2 9 L22 6 L26 9 L26 28 L5 32 Z" fill="url(#fl172)" stroke="#6a6a6a" stroke-width="0.8"/>
<path d="M8 19 L24 17 L24 28 L8 31 Z" fill="#f2f2f2" stroke="#c8c8c8" stroke-width="0.6"/>
<path d="M11 24 L21 23 M11 27 L21 26" stroke="#b8b8b8" stroke-width="0.8"/>
<path d="M8 8 L13 7.5 L13 14 L8 14.5 Z" fill="#2a2a2a"/>
<path d="M11 2 L17 2 L17 12 L21 12 L14 21 L7 12 L11 12 Z" fill="#70cc40" stroke="#48a020" stroke-width="0.6"/><path d="M12 3 L14 3 L14 12" stroke="#b0ec80" stroke-width="1"/>
</svg><svg class="abs" style="left:208px;top:52px" width="28" height="36" viewBox="0 0 28 36">
<defs><linearGradient id="fl208" x1="0" x2="1"><stop offset="0" stop-color="#6a6a6a"/><stop offset="0.2" stop-color="#9a9a9a"/><stop offset="0.8" stop-color="#a8a8a8"/><stop offset="1" stop-color="#7a7a7a"/></linearGradient></defs>
<path d="M2 9 L22 6 L26 9 L26 28 L5 32 Z" fill="url(#fl208)" stroke="#6a6a6a" stroke-width="0.8"/>
<path d="M8 19 L24 17 L24 28 L8 31 Z" fill="#f2f2f2" stroke="#c8c8c8" stroke-width="0.6"/>
<path d="M11 24 L21 23 M11 27 L21 26" stroke="#b8b8b8" stroke-width="0.8"/>
<path d="M8 8 L13 7.5 L13 14 L8 14.5 Z" fill="#2a2a2a"/>
<path d="M14 1 L21 9 L17 9 L17 17 L11 17 L11 9 L7 9 Z" fill="#3a8ae0" stroke="#1a5aa8" stroke-width="0.6"/><path d="M12 10 L12 16" stroke="#90c8ff" stroke-width="1"/>
</svg><svg class="abs" style="left:248px;top:55px" width="23" height="32" viewBox="0 0 23 32">
<defs><linearGradient id="sv248" x1="0" x2="1"><stop offset="0" stop-color="#d8d8d8"/><stop offset="0.25" stop-color="#fbfbfb"/><stop offset="0.55" stop-color="#b4b4bc"/><stop offset="1" stop-color="#8a8a92"/></linearGradient></defs>
<path d="M1 4 L1 29 Q11.5 33 22 29 L22 4 Z" fill="url(#sv248)"/>
<ellipse cx="11.5" cy="4" rx="10.5" ry="3.5" fill="#c8c8cc"/>
<path d="M1 12 Q11.5 16 22 12 M1 20 Q11.5 24 22 20" fill="none" stroke="#8a8a8e" stroke-width="1.6"/>
</svg><svg class="abs" style="left:259px;top:68px" width="15" height="19" viewBox="0 0 15 19"><path d="M7.5 0 L14 8 L10.5 8 L10.5 18.5 L4.5 18.5 L4.5 8 L1 8 Z" fill="#72cc2a"/><path d="M6 8 L6 18" stroke="#a8ec60" stroke-width="1"/></svg><svg class="abs" style="left:289px;top:56px" width="26" height="30" viewBox="-1 -1 26 30"><defs><linearGradient id="g289" x1="0" x2="1"><stop offset="0" stop-color="#9ad040"/><stop offset="0.35" stop-color="#d8f5a0"/><stop offset="1" stop-color="#9ad040"/></linearGradient></defs><path d="M0 17.5 L0 24.5 A12.0 3.5 0 0 0 24 24.5 L24 17.5 Z" fill="url(#g289)" stroke="#5a9a20" stroke-width="1.2"/><path d="M0 17.5 A12.0 3.5 0 0 0 24 17.5" fill="none" stroke="#5a9a20" stroke-width="1"/><path d="M0 10.5 L0 17.5 A12.0 3.5 0 0 0 24 17.5 L24 10.5 Z" fill="url(#g289)" stroke="#5a9a20" stroke-width="1.2"/><path d="M0 10.5 A12.0 3.5 0 0 0 24 10.5" fill="none" stroke="#5a9a20" stroke-width="1"/><path d="M0 3.5 L0 10.5 A12.0 3.5 0 0 0 24 10.5 L24 3.5 Z" fill="url(#g289)" stroke="#5a9a20" stroke-width="1.2"/><path d="M0 3.5 A12.0 3.5 0 0 0 24 3.5" fill="none" stroke="#5a9a20" stroke-width="1"/><ellipse cx="12.0" cy="3.5" rx="12.0" ry="3.5" fill="#d8f5a0" stroke="#5a9a20" stroke-width="1.2"/></svg><svg class="abs" style="left:325px;top:56px" width="26" height="30" viewBox="-1 -1 26 30"><defs><linearGradient id="g325" x1="0" x2="1"><stop offset="0" stop-color="#80bce8"/><stop offset="0.35" stop-color="#d0ecff"/><stop offset="1" stop-color="#80bce8"/></linearGradient></defs><path d="M0 17.5 L0 24.5 A12.0 3.5 0 0 0 24 24.5 L24 17.5 Z" fill="url(#g325)" stroke="#4a88c0" stroke-width="1.2"/><path d="M0 17.5 A12.0 3.5 0 0 0 24 17.5" fill="none" stroke="#4a88c0" stroke-width="1"/><path d="M0 10.5 L0 17.5 A12.0 3.5 0 0 0 24 17.5 L24 10.5 Z" fill="url(#g325)" stroke="#4a88c0" stroke-width="1.2"/><path d="M0 10.5 A12.0 3.5 0 0 0 24 10.5" fill="none" stroke="#4a88c0" stroke-width="1"/><path d="M0 3.5 L0 10.5 A12.0 3.5 0 0 0 24 10.5 L24 3.5 Z" fill="url(#g325)" stroke="#4a88c0" stroke-width="1.2"/><path d="M0 3.5 A12.0 3.5 0 0 0 24 3.5" fill="none" stroke="#4a88c0" stroke-width="1"/><ellipse cx="12.0" cy="3.5" rx="12.0" ry="3.5" fill="#d0ecff" stroke="#4a88c0" stroke-width="1.2"/></svg><svg class="abs" style="left:361px;top:56px" width="26" height="30" viewBox="-1 -1 26 30"><defs><linearGradient id="g361" x1="0" x2="1"><stop offset="0" stop-color="#f2d060"/><stop offset="0.35" stop-color="#fff3b0"/><stop offset="1" stop-color="#f2d060"/></linearGradient></defs><path d="M0 17.5 L0 24.5 A12.0 3.5 0 0 0 24 24.5 L24 17.5 Z" fill="url(#g361)" stroke="#c8a030" stroke-width="1.2"/><path d="M0 17.5 A12.0 3.5 0 0 0 24 17.5" fill="none" stroke="#c8a030" stroke-width="1"/><path d="M0 10.5 L0 17.5 A12.0 3.5 0 0 0 24 17.5 L24 10.5 Z" fill="url(#g361)" stroke="#c8a030" stroke-width="1.2"/><path d="M0 10.5 A12.0 3.5 0 0 0 24 10.5" fill="none" stroke="#c8a030" stroke-width="1"/><path d="M0 3.5 L0 10.5 A12.0 3.5 0 0 0 24 10.5 L24 3.5 Z" fill="url(#g361)" stroke="#c8a030" stroke-width="1.2"/><path d="M0 3.5 A12.0 3.5 0 0 0 24 3.5" fill="none" stroke="#c8a030" stroke-width="1"/><ellipse cx="12.0" cy="3.5" rx="12.0" ry="3.5" fill="#fff3b0" stroke="#c8a030" stroke-width="1.2"/></svg><svg class="abs" style="left:397px;top:56px" width="26" height="30" viewBox="-1 -1 26 30"><defs><linearGradient id="g397" x1="0" x2="1"><stop offset="0" stop-color="#f06048"/><stop offset="0.35" stop-color="#ffb0a0"/><stop offset="1" stop-color="#f06048"/></linearGradient></defs><path d="M0 17.5 L0 24.5 A12.0 3.5 0 0 0 24 24.5 L24 17.5 Z" fill="url(#g397)" stroke="#b83020" stroke-width="1.2"/><path d="M0 17.5 A12.0 3.5 0 0 0 24 17.5" fill="none" stroke="#b83020" stroke-width="1"/><path d="M0 10.5 L0 17.5 A12.0 3.5 0 0 0 24 17.5 L24 10.5 Z" fill="url(#g397)" stroke="#b83020" stroke-width="1.2"/><path d="M0 10.5 A12.0 3.5 0 0 0 24 10.5" fill="none" stroke="#b83020" stroke-width="1"/><path d="M0 3.5 L0 10.5 A12.0 3.5 0 0 0 24 10.5 L24 3.5 Z" fill="url(#g397)" stroke="#b83020" stroke-width="1.2"/><path d="M0 3.5 A12.0 3.5 0 0 0 24 3.5" fill="none" stroke="#b83020" stroke-width="1"/><ellipse cx="12.0" cy="3.5" rx="12.0" ry="3.5" fill="#ffb0a0" stroke="#b83020" stroke-width="1.2"/></svg><svg class="abs" style="left:433px;top:55px" width="23" height="32" viewBox="0 0 23 32">
<defs><linearGradient id="sv433" x1="0" x2="1"><stop offset="0" stop-color="#d8d8d8"/><stop offset="0.25" stop-color="#fbfbfb"/><stop offset="0.55" stop-color="#b4b4bc"/><stop offset="1" stop-color="#8a8a92"/></linearGradient></defs>
<path d="M1 4 L1 29 Q11.5 33 22 29 L22 4 Z" fill="url(#sv433)"/>
<ellipse cx="11.5" cy="4" rx="10.5" ry="3.5" fill="#c8c8cc"/>
<path d="M1 12 Q11.5 16 22 12 M1 20 Q11.5 24 22 20" fill="none" stroke="#8a8a8e" stroke-width="1.6"/>
</svg><svg class="abs" style="left:446px;top:70px" width="16" height="16" viewBox="0 0 16 16"><path d="M6 0.5 L10 0.5 L10 6 L15.5 6 L15.5 10 L10 10 L10 15.5 L6 15.5 L6 10 L0.5 10 L0.5 6 L6 6 Z" fill="#6cc83a" stroke="#4a9a28" stroke-width="0.6"/></svg><svg class="abs" style="left:39px;top:945px" width="95" height="136" viewBox="0 0 95 136">
<defs>
<radialGradient id="pm" cx="0.5" cy="0.45" r="0.75"><stop offset="0" stop-color="#c29a6a"/><stop offset="0.6" stop-color="#ae8656"/><stop offset="1" stop-color="#8a6a48"/></radialGradient>
<radialGradient id="pd" cx="0.5" cy="0.5" r="0.5"><stop offset="0" stop-color="rgba(80,50,25,0.4)"/><stop offset="1" stop-color="rgba(80,50,25,0)"/></radialGradient>
<radialGradient id="po" cx="0.5" cy="0.5" r="0.5"><stop offset="0" stop-color="rgba(185,105,45,0.5)"/><stop offset="1" stop-color="rgba(185,105,45,0)"/></radialGradient>
<radialGradient id="pl" cx="0.5" cy="0.5" r="0.5"><stop offset="0" stop-color="rgba(225,200,165,0.5)"/><stop offset="1" stop-color="rgba(225,200,165,0)"/></radialGradient>
<linearGradient id="vg" x1="0" y1="0" x2="0" y2="1"><stop offset="0" stop-color="#5a3a20"/><stop offset="1" stop-color="#6e4a2a"/></linearGradient>
<linearGradient id="bd" x1="0" y1="0" x2="0" y2="1"><stop offset="0" stop-color="rgba(40,24,10,0)"/><stop offset="0.3" stop-color="rgba(40,24,10,0.75)"/><stop offset="0.7" stop-color="rgba(40,24,10,0.75)"/><stop offset="1" stop-color="rgba(40,24,10,0)"/></linearGradient>
</defs>
<rect x="0" y="0" width="95" height="136" fill="#746858"/>
<path d="M12 7 L36 7 Q40 12 48 12 Q56 12 60 7 L82 7 L89 14 L89 124 L83 129 L13 129 L7 123 L7 14 Z" fill="url(#pm)"/>
<ellipse cx="48" cy="16" rx="32" ry="12" fill="url(#pl)"/>
<ellipse cx="20" cy="42" rx="16" ry="22" fill="url(#pd)"/>
<ellipse cx="78" cy="90" rx="16" ry="28" fill="url(#po)"/>
<ellipse cx="24" cy="102" rx="18" ry="20" fill="url(#pd)"/>
<ellipse cx="55" cy="118" rx="30" ry="10" fill="url(#pl)"/>
<path d="M23 23 L73 23 L48 117 Z" fill="url(#vg)" opacity="0.88"/>
<path d="M48 30 L57 56 L48 96 L39 56 Z" fill="#b08c60" opacity="0.55"/>
<path d="M44 40 Q51 45 46 52 Q41 58 50 63" fill="none" stroke="#d4b488" stroke-width="1.4" opacity="0.7"/>
<path d="M28 27 L27 35 M68 27 L66 33" stroke="#c8a878" stroke-width="1.2" opacity="0.7"/>
<rect x="4" y="54" width="87" height="27" fill="url(#bd)"/>
<text x="48" y="61.5" text-anchor="middle" font-family="Liberation Serif" font-size="5" font-weight="bold" fill="#1e1008" textLength="46" lengthAdjust="spacingAndGlyphs">THE ELDER SCROLLS III</text>
<text x="9" y="77" font-family="Liberation Serif" font-size="18" fill="#eadcbc">M</text>
<text x="25" y="74" font-family="Liberation Serif" font-size="12" fill="#eadcbc" textLength="51" lengthAdjust="spacingAndGlyphs">ORROWIN</text>
<text x="76" y="77" font-family="Liberation Serif" font-size="18" fill="#eadcbc">D</text>
<rect x="4" y="125" width="8" height="6" fill="#b03020" opacity="0.75"/>
<rect x="13" y="125" width="14" height="6" fill="#9a9aa8" opacity="0.6"/>
<rect x="81" y="120" width="9" height="11" fill="#e0e0e0" opacity="0.75"/>
</svg></body></html>
